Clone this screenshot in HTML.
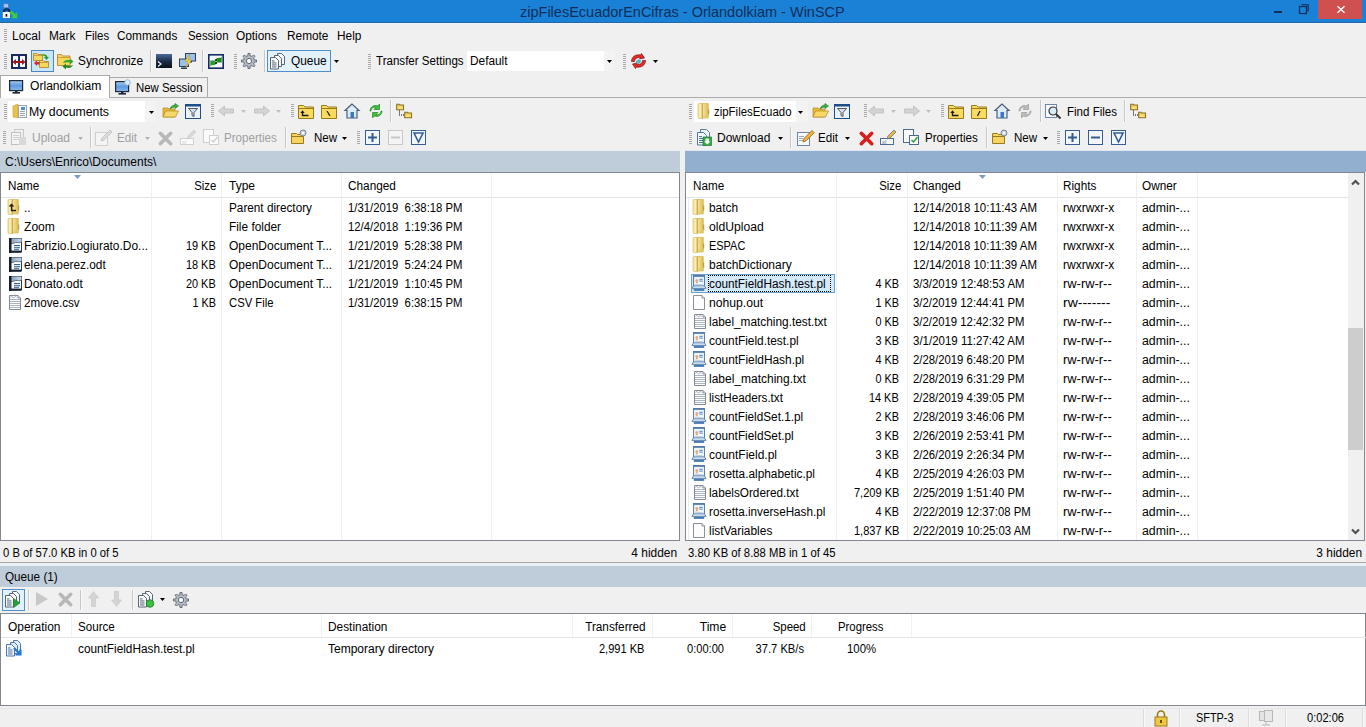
<!DOCTYPE html><html><head><meta charset="utf-8"><style>
html,body{margin:0;padding:0}
body{width:1366px;height:727px;overflow:hidden;position:relative;background:#f0f0f0;font-family:"Liberation Sans",sans-serif;font-size:12px;color:#000}
.t{position:absolute;white-space:pre;line-height:14px;height:14px}
svg{overflow:visible}
</style></head><body>
<div style="position:absolute;left:0px;top:0px;width:1366px;height:22px;background:#1a82d6"></div>
<div style="position:absolute;left:0px;top:22px;width:1366px;height:1px;background:#2a65a4"></div>
<div style="position:absolute;left:0px;top:23px;width:1366px;height:1px;background:#eaf6fc"></div>
<div class="t" style="left:520px;top:5px;color:#0f2f5a;font-size:14.5px;line-height:16px;height:16px;top:4px;">zipFilesEcuadorEnCifras - Orlandolkiam - WinSCP</div>
<svg style="position:absolute;left:2px;top:3px" width="16" height="16" viewBox="0 0 16 16"><rect x="1.5" y="0.8" width="5" height="4" fill="#a4c8f4" stroke="#4a78b8" stroke-width="0.7"/>
<path d="M1.8 9.2a2.9 2.9 0 0 1 5.8 0" stroke="#10285a" stroke-width="2" fill="none"/>
<rect x="0.8" y="9" width="7.2" height="6" fill="#f2f2f0"/><rect x="3.6" y="11" width="1.6" height="2.6" fill="#101010"/>
<path d="M8.5 8.5l5 5" stroke="#3ccc3c" stroke-width="3"/><path d="M15.2 9v6.2H9z" fill="#3ccc3c"/></svg>
<div style="position:absolute;left:1274px;top:11px;width:8px;height:2px;background:#0f2f5a"></div>
<svg style="position:absolute;left:1298px;top:4px" width="12" height="11" viewBox="0 0 12 11"><rect x="1.5" y="2.5" width="7" height="7" fill="none" stroke="#0f2f5a" stroke-width="1.3"/><path d="M3.5 0.8h6.7v6.7" fill="none" stroke="#0f2f5a" stroke-width="1.1"/></svg>
<div style="position:absolute;left:1318px;top:0px;width:44px;height:19px;background:#d05050"></div>
<svg style="position:absolute;left:1337px;top:6px" width="8" height="7" viewBox="0 0 8 7"><path d="M0.5 0.3l7 6.4M7.5 0.3l-7 6.4" stroke="#fff" stroke-width="1.4"/></svg>
<svg style="position:absolute;left:4px;top:29px" width="3" height="13" viewBox="0 0 3 13"><rect x="0" y="0" width="3" height="1" fill="#a9a9a9"/><rect x="0" y="2" width="3" height="1" fill="#a9a9a9"/><rect x="0" y="4" width="3" height="1" fill="#a9a9a9"/><rect x="0" y="6" width="3" height="1" fill="#a9a9a9"/><rect x="0" y="8" width="3" height="1" fill="#a9a9a9"/><rect x="0" y="10" width="3" height="1" fill="#a9a9a9"/><rect x="0" y="12" width="3" height="1" fill="#a9a9a9"/></svg>
<div class="t" style="left:12px;top:29px;">Local</div>
<div class="t" style="left:49px;top:29px;transform:scaleX(0.9875);transform-origin:0 0;">Mark</div>
<div class="t" style="left:85px;top:29px;transform:scaleX(0.9532);transform-origin:0 0;">Files</div>
<div class="t" style="left:117px;top:29px;transform:scaleX(0.9824);transform-origin:0 0;">Commands</div>
<div class="t" style="left:188px;top:29px;transform:scaleX(0.9479);transform-origin:0 0;">Session</div>
<div class="t" style="left:236px;top:29px;transform:scaleX(0.9878);transform-origin:0 0;">Options</div>
<div class="t" style="left:287px;top:29px;transform:scaleX(0.9863);transform-origin:0 0;">Remote</div>
<div class="t" style="left:337px;top:29px;transform:scaleX(0.9876);transform-origin:0 0;">Help</div>
<svg style="position:absolute;left:4px;top:54px" width="3" height="15" viewBox="0 0 3 15"><rect x="0" y="0" width="3" height="1" fill="#a9a9a9"/><rect x="0" y="2" width="3" height="1" fill="#a9a9a9"/><rect x="0" y="4" width="3" height="1" fill="#a9a9a9"/><rect x="0" y="6" width="3" height="1" fill="#a9a9a9"/><rect x="0" y="8" width="3" height="1" fill="#a9a9a9"/><rect x="0" y="10" width="3" height="1" fill="#a9a9a9"/><rect x="0" y="12" width="3" height="1" fill="#a9a9a9"/><rect x="0" y="14" width="3" height="1" fill="#a9a9a9"/></svg>
<svg style="position:absolute;left:11px;top:54px" width="16" height="15" viewBox="0 0 16 15"><rect x="1" y="1" width="14" height="13" fill="#f4f8fc" stroke="#1b2a5a" stroke-width="2"/><rect x="7" y="1" width="2" height="13" fill="#1b3070"/>
<path d="M1.5 8l3.5-3v2h6V5l3.5 3-3.5 3V9H5v2z" fill="#a51515"/></svg>
<div style="position:absolute;left:31px;top:50px;width:23px;height:22px;background:#c9e5fa;border:1px solid #4d84c4;box-sizing:border-box"></div>
<svg style="position:absolute;left:33px;top:52px" width="17" height="17" viewBox="0 0 17 17"><path d="M0.5 1.5h3.5l1 1h4.5v6h-9z" fill="#f7d85a" stroke="#b8892a" stroke-width="0.9"/><path d="M0.5 3.5h9" stroke="#b8892a" stroke-width="0.7"/>
<path d="M6.5 8.5h3.5l1 1h4.5v6h-9z" fill="#f7d85a" stroke="#b8892a" stroke-width="0.9"/><path d="M6.5 10.5h9" stroke="#b8892a" stroke-width="0.7"/>
<path d="M9.5 2.5c2.5-0.5 4.5 0.5 5 2.5h1.5l-2.5 3-2.5-3h1.5c-0.5-1-1.5-1.5-3-1.5z" fill="#2e9e2e"/>
<path d="M1 11l3-2.5v1.5h2.5v2.5H4v1.5z" fill="#d42a2a"/></svg>
<svg style="position:absolute;left:57px;top:53px" width="17" height="17" viewBox="0 0 17 17"><path d="M0.5 1.5h4l1 1.5h7.5v9.5h-12.5z" fill="#f7d85a" stroke="#b8892a" stroke-width="0.9"/><path d="M0.5 4.5h12.5" stroke="#b8892a" stroke-width="0.7"/>
<path d="M6 10c1-2.5 4-3.5 7-2.5v-2l3.5 3-3.5 3v-2c-2-0.5-4.5-0.5-7 0.5z" fill="#2ea82e"/>
<path d="M16 12c-1 2.5-4 3.5-7 2.5v2l-3.5-3 3.5-3v2c2 0.5 4.5 0.5 7-0.5z" fill="#1e8a1e"/></svg>
<div class="t" style="left:78px;top:54px;transform:scaleX(0.9855);transform-origin:0 0;">Synchronize</div>
<div style="position:absolute;left:150px;top:50px;width:1px;height:22px;background:#c6c6c6"></div>
<div style="position:absolute;left:151px;top:50px;width:1px;height:22px;background:#fbfbfb"></div>
<svg style="position:absolute;left:156px;top:54px" width="16" height="14" viewBox="0 0 16 14"><defs><linearGradient id="cg" x1="0" x2="0" y1="0" y2="1"><stop offset="0" stop-color="#4a6a9a"/><stop offset="0.5" stop-color="#1e2e48"/><stop offset="1" stop-color="#0c1218"/></linearGradient></defs>
<rect x="0" y="0" width="16" height="14" fill="url(#cg)"/><path d="M2 7.5l3 2.5-3 2.5" stroke="#e8eef4" stroke-width="1.2" fill="none"/></svg>
<svg style="position:absolute;left:179px;top:53px" width="17" height="16" viewBox="0 0 17 16"><rect x="6.5" y="0.5" width="10" height="7.5" fill="#9cc0ea" stroke="#2e3e58"/><rect x="10" y="8" width="3" height="1.5" fill="#2e3e58"/>
<rect x="0.5" y="6" width="9" height="7.5" fill="#9cc0ea" stroke="#2e3e58"/><rect x="2" y="14.5" width="6" height="1.5" fill="#2e3e58"/><rect x="4.5" y="13.5" width="1" height="1" fill="#2e3e58"/>
<path d="M10.5 1.5l-4.5 6.5h3l-2 6.5 5.5-7.5h-3z" fill="#f6e040" stroke="#b09010" stroke-width="0.5"/></svg>
<div style="position:absolute;left:202px;top:50px;width:1px;height:22px;background:#c6c6c6"></div>
<div style="position:absolute;left:203px;top:50px;width:1px;height:22px;background:#fbfbfb"></div>
<svg style="position:absolute;left:208px;top:54px" width="16" height="15" viewBox="0 0 16 15"><rect x="0.8" y="0.8" width="14.4" height="13.4" fill="#f4faff" stroke="#142a60" stroke-width="1.6"/>
<path d="M7 6c1.5-2 3.8-2.6 5.5-2l1.2-1.4v5.8h-5.8l1.8-1.6c-1-.4-2 .2-2.7.9z" fill="#1e8a1e"/>
<path d="M9 9c-1.5 2-3.8 2.6-5.5 2l-1.2 1.4v-5.8h5.8l-1.8 1.6c1 .4 2-.2 2.7-.9z" fill="#2a9a2a"/>
<circle cx="8" cy="6.2" r="0.9" fill="#111"/><circle cx="8" cy="9" r="0.9" fill="#111"/></svg>
<svg style="position:absolute;left:234px;top:54px" width="3" height="15" viewBox="0 0 3 15"><rect x="0" y="0" width="3" height="1" fill="#a9a9a9"/><rect x="0" y="2" width="3" height="1" fill="#a9a9a9"/><rect x="0" y="4" width="3" height="1" fill="#a9a9a9"/><rect x="0" y="6" width="3" height="1" fill="#a9a9a9"/><rect x="0" y="8" width="3" height="1" fill="#a9a9a9"/><rect x="0" y="10" width="3" height="1" fill="#a9a9a9"/><rect x="0" y="12" width="3" height="1" fill="#a9a9a9"/><rect x="0" y="14" width="3" height="1" fill="#a9a9a9"/></svg>
<svg style="position:absolute;left:241px;top:53px" width="16" height="16" viewBox="0 0 16 16"><path d="M6.98 2.70 L6.94 0.47 L9.06 0.47 L9.02 2.70 L10.07 3.01 L11.03 3.53 L12.57 1.93 L14.07 3.43 L12.47 4.97 L12.99 5.93 L13.30 6.98 L15.53 6.94 L15.53 9.06 L13.30 9.02 L12.99 10.07 L12.47 11.03 L14.07 12.57 L12.57 14.07 L11.03 12.47 L10.07 12.99 L9.02 13.30 L9.06 15.53 L6.94 15.53 L6.98 13.30 L5.93 12.99 L4.97 12.47 L3.43 14.07 L1.93 12.57 L3.53 11.03 L3.01 10.07 L2.70 9.02 L0.47 9.06 L0.47 6.94 L2.70 6.98 L3.01 5.93 L3.53 4.97 L1.93 3.43 L3.43 1.93 L4.97 3.53 L5.93 3.01Z" fill="#b2bac4" stroke="#5e6670" stroke-width="0.9"/><circle cx="8" cy="8" r="2.6" fill="#fff" stroke="#5e6670" stroke-width="1"/></svg>
<div style="position:absolute;left:264px;top:50px;width:1px;height:22px;background:#c6c6c6"></div>
<div style="position:absolute;left:265px;top:50px;width:1px;height:22px;background:#fbfbfb"></div>
<div style="position:absolute;left:267px;top:50px;width:64px;height:22px;background:#e3f1fb;border:1px solid #4f8fcb;box-sizing:border-box"></div>
<svg style="position:absolute;left:270px;top:53px" width="16" height="17" viewBox="0 0 16 17"><path d="M7.5 0.5h4l3 3v8h-7z" fill="#f6f8fb" stroke="#4a5566" stroke-width="0.9"/><path d="M4.5 2.5h4l3 3v8h-7z" fill="#f6f8fb" stroke="#4a5566" stroke-width="0.9"/>
<path d="M0.5 4.5h5l3 3v8.5h-8z" fill="#f8fafc" stroke="#4a5566" stroke-width="0.9"/><g fill="#4a5566"><rect x="2" y="7.5" width="2.5" height="0.9"/><rect x="2" y="9.5" width="4.5" height="0.9"/><rect x="2" y="11.5" width="4.5" height="0.9"/><rect x="2" y="13.5" width="4.5" height="0.9"/></g></svg>
<div class="t" style="left:291px;top:54px;transform:scaleX(0.9911);transform-origin:0 0;">Queue</div>
<svg style="position:absolute;left:334px;top:60px" width="5" height="3" viewBox="0 0 5 3"><path d="M0 0H5L2.5 3Z" fill="#000"/></svg>
<svg style="position:absolute;left:368px;top:54px" width="3" height="15" viewBox="0 0 3 15"><rect x="0" y="0" width="3" height="1" fill="#a9a9a9"/><rect x="0" y="2" width="3" height="1" fill="#a9a9a9"/><rect x="0" y="4" width="3" height="1" fill="#a9a9a9"/><rect x="0" y="6" width="3" height="1" fill="#a9a9a9"/><rect x="0" y="8" width="3" height="1" fill="#a9a9a9"/><rect x="0" y="10" width="3" height="1" fill="#a9a9a9"/><rect x="0" y="12" width="3" height="1" fill="#a9a9a9"/><rect x="0" y="14" width="3" height="1" fill="#a9a9a9"/></svg>
<div class="t" style="left:376px;top:54px;transform:scaleX(0.9638);transform-origin:0 0;">Transfer Settings</div>
<div style="position:absolute;left:467px;top:51px;width:148px;height:20px;background:#fff"></div>
<div style="position:absolute;left:604px;top:51px;width:11px;height:20px;background:#f3f3f3"></div>
<div class="t" style="left:470px;top:54px;transform:scaleX(0.9869);transform-origin:0 0;">Default</div>
<svg style="position:absolute;left:607px;top:60px" width="5" height="3" viewBox="0 0 5 3"><path d="M0 0H5L2.5 3Z" fill="#000"/></svg>
<svg style="position:absolute;left:623px;top:54px" width="3" height="15" viewBox="0 0 3 15"><rect x="0" y="0" width="3" height="1" fill="#a9a9a9"/><rect x="0" y="2" width="3" height="1" fill="#a9a9a9"/><rect x="0" y="4" width="3" height="1" fill="#a9a9a9"/><rect x="0" y="6" width="3" height="1" fill="#a9a9a9"/><rect x="0" y="8" width="3" height="1" fill="#a9a9a9"/><rect x="0" y="10" width="3" height="1" fill="#a9a9a9"/><rect x="0" y="12" width="3" height="1" fill="#a9a9a9"/><rect x="0" y="14" width="3" height="1" fill="#a9a9a9"/></svg>
<svg style="position:absolute;left:630px;top:53px" width="17" height="16" viewBox="0 0 17 16"><path d="M1.5 8.5c0-4.5 4-7.5 9-6.5l1-1.5 3 4.5-5 1 1-1.5c-3.5-0.5-6 1.5-6 4z" fill="#e42a2a" stroke="#8a1010" stroke-width="0.7"/>
<path d="M15.5 7.5c0 4.5-4 7.5-9 6.5l-1 1.5-3-4.5 5-1-1 1.5c3.5 0.5 6-1.5 6-4z" fill="#e42a2a" stroke="#8a1010" stroke-width="0.7"/>
<path d="M5.5 9.5c0.5-2 2-3 3.5-3l2 1c0 2-1.5 3.5-3.5 3.5z" fill="#58a8d8"/><path d="M7 8.5l2 1.5" stroke="#70c070" stroke-width="1.5"/></svg>
<svg style="position:absolute;left:653px;top:60px" width="5" height="3" viewBox="0 0 5 3"><path d="M0 0H5L2.5 3Z" fill="#000"/></svg>
<div style="position:absolute;left:0px;top:75px;width:110px;height:23px;background:#fff;border:1px solid #a9a9a9;border-bottom:none;box-sizing:border-box"></div>
<svg style="position:absolute;left:9px;top:80px" width="17" height="16" viewBox="0 0 17 16"><defs><linearGradient id="mg" x1="0" x2="0" y1="0" y2="1"><stop offset="0" stop-color="#a8cdf2"/><stop offset="0.5" stop-color="#5f9be0"/><stop offset="1" stop-color="#8ab8ea"/></linearGradient></defs>
<rect x="0.6" y="0.6" width="13" height="10" fill="url(#mg)" stroke="#1a2838" stroke-width="1.2"/>
<rect x="6" y="11" width="2.5" height="1" fill="#1a2838"/><rect x="3.5" y="12" width="7.5" height="1.6" fill="#1a2838"/></svg>
<div class="t" style="left:30px;top:79px;transform:scaleX(1.0087);transform-origin:0 0;">Orlandolkiam</div>
<div style="position:absolute;left:109px;top:77px;width:99px;height:21px;background:#f0f0f0;border:1px solid #a9a9a9;border-left:none;box-sizing:border-box"></div>
<div style="position:absolute;left:109px;top:77px;width:1px;height:21px;background:#a9a9a9"></div>
<svg style="position:absolute;left:115px;top:81px" width="17" height="16" viewBox="0 0 17 16"><defs><linearGradient id="mg" x1="0" x2="0" y1="0" y2="1"><stop offset="0" stop-color="#a8cdf2"/><stop offset="0.5" stop-color="#5f9be0"/><stop offset="1" stop-color="#8ab8ea"/></linearGradient></defs>
<rect x="0.6" y="0.6" width="13" height="10" fill="url(#mg)" stroke="#1a2838" stroke-width="1.2"/>
<rect x="6" y="11" width="2.5" height="1" fill="#1a2838"/><rect x="3.5" y="12" width="7.5" height="1.6" fill="#1a2838"/><circle cx="12.5" cy="1.5" r="2.8" fill="#d8ecfc" stroke="#8aa8c8" stroke-width="0.8"/></svg>
<div class="t" style="left:136px;top:81px;transform:scaleX(0.9500);transform-origin:0 0;">New Session</div>
<div style="position:absolute;left:109px;top:97px;width:1257px;height:1px;background:#acacac"></div>
<svg style="position:absolute;left:4px;top:104px" width="3" height="15" viewBox="0 0 3 15"><rect x="0" y="0" width="3" height="1" fill="#a9a9a9"/><rect x="0" y="2" width="3" height="1" fill="#a9a9a9"/><rect x="0" y="4" width="3" height="1" fill="#a9a9a9"/><rect x="0" y="6" width="3" height="1" fill="#a9a9a9"/><rect x="0" y="8" width="3" height="1" fill="#a9a9a9"/><rect x="0" y="10" width="3" height="1" fill="#a9a9a9"/><rect x="0" y="12" width="3" height="1" fill="#a9a9a9"/><rect x="0" y="14" width="3" height="1" fill="#a9a9a9"/></svg>
<div style="position:absolute;left:8px;top:101px;width:148px;height:21px;background:#fff"></div>
<div style="position:absolute;left:145px;top:101px;width:11px;height:21px;background:#f3f3f3"></div>
<svg style="position:absolute;left:12px;top:103px" width="16" height="16" viewBox="0 0 16 16"><path d="M1 3l5-2v14l-5-1z" fill="#e8c24f" stroke="#c9a23a" stroke-width="0.6"/>
<rect x="6.5" y="2.5" width="8" height="12" fill="#f8f8fa" stroke="#9aa7b8"/>
<rect x="9" y="4" width="4" height="3" fill="#4a90d9"/><g fill="#9aa"><rect x="8" y="8" width="5" height="1"/><rect x="8" y="10" width="5" height="1"/><rect x="8" y="12" width="5" height="1"/></g></svg>
<div class="t" style="left:29px;top:105px;transform:scaleX(1.0254);transform-origin:0 0;">My documents</div>
<svg style="position:absolute;left:149px;top:111px" width="5" height="3" viewBox="0 0 5 3"><path d="M0 0H5L2.5 3Z" fill="#000"/></svg>
<svg style="position:absolute;left:162px;top:103px" width="17" height="16" viewBox="0 0 17 16"><path d="M1 5h5l1 1h6v8H1z" fill="#e6bb3c" stroke="#b08a20" stroke-width="0.7"/>
<path d="M1 14l2.5-6h13l-3 6z" fill="#f7d86a" stroke="#b08a20" stroke-width="0.7"/>
<path d="M8 6c1-3 3-4 5-4v-1.5l3.5 2.5-3.5 2.5v-1.5c-2 0-3.5 1-5 2z" fill="#3cb03c" stroke="#1e7a1e" stroke-width="0.6"/></svg>
<svg style="position:absolute;left:185px;top:104px" width="16" height="15" viewBox="0 0 16 15"><rect x="0.5" y="0.5" width="15" height="14" fill="#eaf2fb" stroke="#1d4e89"/>
<rect x="0.5" y="0.5" width="15" height="2" fill="#1d4e89"/>
<path d="M3.5 4.5h9l-3.5 4v4l-2 -1v-3z" fill="#cfe0f3" stroke="#333" stroke-width="0.8"/></svg>
<svg style="position:absolute;left:211px;top:104px" width="3" height="14" viewBox="0 0 3 14"><rect x="0" y="0" width="3" height="1" fill="#a9a9a9"/><rect x="0" y="2" width="3" height="1" fill="#a9a9a9"/><rect x="0" y="4" width="3" height="1" fill="#a9a9a9"/><rect x="0" y="6" width="3" height="1" fill="#a9a9a9"/><rect x="0" y="8" width="3" height="1" fill="#a9a9a9"/><rect x="0" y="10" width="3" height="1" fill="#a9a9a9"/><rect x="0" y="12" width="3" height="1" fill="#a9a9a9"/></svg>
<svg style="position:absolute;left:218px;top:105px" width="17" height="12" viewBox="0 0 17 12"><path d="M0.5 6l6-5v3h9v4h-9v3z" fill="#d3d3d3" stroke="#c4c4c4"/></svg>
<svg style="position:absolute;left:241px;top:110px" width="5" height="3" viewBox="0 0 5 3"><path d="M0 0H5L2.5 3Z" fill="#c0c0c0"/></svg>
<svg style="position:absolute;left:253px;top:105px" width="17" height="12" viewBox="0 0 17 12"><path d="M16.5 6l-6-5v3h-9v4h9v3z" fill="#d3d3d3" stroke="#c4c4c4"/></svg>
<svg style="position:absolute;left:276px;top:110px" width="5" height="3" viewBox="0 0 5 3"><path d="M0 0H5L2.5 3Z" fill="#c0c0c0"/></svg>
<svg style="position:absolute;left:291px;top:104px" width="3" height="14" viewBox="0 0 3 14"><rect x="0" y="0" width="3" height="1" fill="#a9a9a9"/><rect x="0" y="2" width="3" height="1" fill="#a9a9a9"/><rect x="0" y="4" width="3" height="1" fill="#a9a9a9"/><rect x="0" y="6" width="3" height="1" fill="#a9a9a9"/><rect x="0" y="8" width="3" height="1" fill="#a9a9a9"/><rect x="0" y="10" width="3" height="1" fill="#a9a9a9"/><rect x="0" y="12" width="3" height="1" fill="#a9a9a9"/></svg>
<svg style="position:absolute;left:298px;top:104px" width="16" height="15" viewBox="0 0 16 15"><path d="M0.5 1.5h5l1.5 1.5h8.5v11.5h-15z" fill="#f9dc5e" stroke="#9a7a18"/>
<path d="M0.5 4.5h15" stroke="#9a7a18"/>
<path d="M2.3 9L4.5 6.3 6.7 9z" fill="#1a1a1a"/><path d="M4.5 8.5v3h6" stroke="#1a1a1a" stroke-width="1.4" fill="none"/></svg>
<svg style="position:absolute;left:321px;top:104px" width="16" height="15" viewBox="0 0 16 15"><path d="M0.5 1.5h5l1.5 1.5h8.5v11.5h-15z" fill="#f9dc5e" stroke="#9a7a18"/>
<path d="M0.5 4.5h15" stroke="#9a7a18"/><path d="M6 7l3 5" stroke="#222" stroke-width="1.3"/></svg>
<svg style="position:absolute;left:344px;top:103px" width="16" height="16" viewBox="0 0 16 16"><path d="M8 1L1 7.5h2V15h10V7.5h2z" fill="#dcebf8" stroke="#4a6078" stroke-width="1.2"/>
<rect x="6.5" y="9" width="3.5" height="6" fill="#3a78c8"/></svg>
<svg style="position:absolute;left:368px;top:103px" width="16" height="16" viewBox="0 0 16 16"><path d="M2 8c0-4 4-6.5 8-5l1.5-2v5.5h-5.5l2-2c-2.5-1-5 1-5 3.5z" fill="#3fbf3f" stroke="#1d8a1d" stroke-width="0.7"/>
<path d="M14 8c0 4-4 6.5-8 5l-1.5 2v-5.5h5.5l-2 2c2.5 1 5-1 5-3.5z" fill="#3fbf3f" stroke="#1d8a1d" stroke-width="0.7"/></svg>
<div style="position:absolute;left:390px;top:100px;width:1px;height:22px;background:#c6c6c6"></div>
<div style="position:absolute;left:391px;top:100px;width:1px;height:22px;background:#fbfbfb"></div>
<svg style="position:absolute;left:396px;top:103px" width="17" height="16" viewBox="0 0 17 16"><path d="M0.7 1.2h2.5l0.8 0.8h3.5v4.8H0.7z" fill="#f8e07a" stroke="#8a7020" stroke-width="1.1"/><path d="M0.7 2.8h6.8" stroke="#c0a030" stroke-width="0.6"/>
<path d="M8.7 9.2h2.5l0.8 0.8h3.5v4.8H8.7z" fill="#f8e07a" stroke="#8a7020" stroke-width="1.1"/><path d="M8.7 10.8h6.8" stroke="#c0a030" stroke-width="0.6"/>
<g fill="#000"><rect x="3" y="7.5" width="1" height="1"/><rect x="3" y="9.5" width="1" height="1"/><rect x="3" y="11.5" width="1" height="1"/><rect x="5" y="11.5" width="1" height="1"/><rect x="7" y="11.5" width="1" height="1"/></g></svg>
<svg style="position:absolute;left:3px;top:131px" width="3" height="13" viewBox="0 0 3 13"><rect x="0" y="0" width="3" height="1" fill="#a9a9a9"/><rect x="0" y="2" width="3" height="1" fill="#a9a9a9"/><rect x="0" y="4" width="3" height="1" fill="#a9a9a9"/><rect x="0" y="6" width="3" height="1" fill="#a9a9a9"/><rect x="0" y="8" width="3" height="1" fill="#a9a9a9"/><rect x="0" y="10" width="3" height="1" fill="#a9a9a9"/><rect x="0" y="12" width="3" height="1" fill="#a9a9a9"/></svg>
<svg style="position:absolute;left:10px;top:129px" width="17" height="17" viewBox="0 0 17 17"><rect x="4.5" y="0.5" width="9" height="11" fill="#f0f0f0" stroke="#c8c8c8"/>
<rect x="1.5" y="3.5" width="9" height="12" fill="#f4f4f4" stroke="#c0c0c0"/>
<g fill="#cfcfcf"><rect x="3" y="6" width="6" height="1"/><rect x="3" y="8" width="6" height="1"/><rect x="3" y="10" width="6" height="1"/></g>
<rect x="9" y="8" width="7" height="8" fill="#d8d8d8"/></svg>
<div class="t" style="left:32px;top:131px;color:#a0a0a0;">Upload</div>
<svg style="position:absolute;left:78px;top:137px" width="5" height="3" viewBox="0 0 5 3"><path d="M0 0H5L2.5 3Z" fill="#b0b0b0"/></svg>
<div style="position:absolute;left:90px;top:127px;width:1px;height:21px;background:#c6c6c6"></div>
<div style="position:absolute;left:91px;top:127px;width:1px;height:21px;background:#fbfbfb"></div>
<svg style="position:absolute;left:95px;top:129px" width="17" height="17" viewBox="0 0 17 17"><rect x="0.5" y="3.5" width="12" height="13" fill="#f4f4f4" stroke="#cfcfcf"/>
<path d="M6 12l1-3 8-8 2 2-8 8z" fill="#dcdcdc" stroke="#c4c4c4"/></svg>
<div class="t" style="left:117px;top:131px;color:#a0a0a0;transform:scaleX(0.9697);transform-origin:0 0;">Edit</div>
<svg style="position:absolute;left:145px;top:137px" width="5" height="3" viewBox="0 0 5 3"><path d="M0 0H5L2.5 3Z" fill="#b0b0b0"/></svg>
<svg style="position:absolute;left:158px;top:131px" width="15" height="15" viewBox="0 0 15 15"><path d="M2.3 2.3L12.7 12.7M12.7 2.3L2.3 12.7" stroke="#b8b8b8" stroke-width="3.6" stroke-linecap="round"/></svg>
<svg style="position:absolute;left:180px;top:129px" width="17" height="17" viewBox="0 0 17 17"><rect x="0.5" y="9.5" width="13" height="6" fill="#fbfbfb" stroke="#cfcfcf"/>
<text x="2" y="15" font-size="6" fill="#cfcfcf" font-family="Liberation Sans">x|</text>
<path d="M7 10l1-3 6-6 2 2-6 6z" fill="#d8d8d8" stroke="#cfcfcf" stroke-width="0.7"/></svg>
<svg style="position:absolute;left:203px;top:129px" width="17" height="17" viewBox="0 0 17 17"><rect x="0.5" y="0.5" width="10" height="13" fill="#fbfbfb" stroke="#cfcfcf"/>
<rect x="6.5" y="6.5" width="9" height="9" fill="#fbfbfb" stroke="#cfcfcf"/>
<path d="M8.5 11l2 2 4-5" stroke="#cfcfcf" stroke-width="1.5" fill="none"/></svg>
<div class="t" style="left:224px;top:131px;color:#a0a0a0;transform:scaleX(0.9644);transform-origin:0 0;">Properties</div>
<div style="position:absolute;left:285px;top:127px;width:1px;height:21px;background:#c6c6c6"></div>
<div style="position:absolute;left:286px;top:127px;width:1px;height:21px;background:#fbfbfb"></div>
<svg style="position:absolute;left:291px;top:129px" width="16" height="16" viewBox="0 0 16 16"><path d="M0.5 4.5h5l1 1h6v9h-12z" fill="#f5d463" stroke="#9a7a18"/>
<path d="M0.5 7.5h12" stroke="#9a7a18"/>
<circle cx="12" cy="4" r="3" fill="#c8d4e0" stroke="#7a8a9a"/><circle cx="12" cy="4" r="1.2" fill="#fff"/></svg>
<div class="t" style="left:314px;top:131px;transform:scaleX(0.9636);transform-origin:0 0;">New</div>
<svg style="position:absolute;left:342px;top:137px" width="5" height="3" viewBox="0 0 5 3"><path d="M0 0H5L2.5 3Z" fill="#000"/></svg>
<svg style="position:absolute;left:357px;top:131px" width="3" height="13" viewBox="0 0 3 13"><rect x="0" y="0" width="3" height="1" fill="#a9a9a9"/><rect x="0" y="2" width="3" height="1" fill="#a9a9a9"/><rect x="0" y="4" width="3" height="1" fill="#a9a9a9"/><rect x="0" y="6" width="3" height="1" fill="#a9a9a9"/><rect x="0" y="8" width="3" height="1" fill="#a9a9a9"/><rect x="0" y="10" width="3" height="1" fill="#a9a9a9"/><rect x="0" y="12" width="3" height="1" fill="#a9a9a9"/></svg>
<svg style="position:absolute;left:365px;top:130px" width="15" height="15" viewBox="0 0 15 15"><rect x="0.5" y="0.5" width="14" height="14" fill="#f2f6fb" stroke="#345d91"/>
<path d="M7.5 3v9M3 7.5h9" stroke="#345d91" stroke-width="2"/></svg>
<svg style="position:absolute;left:388px;top:130px" width="15" height="15" viewBox="0 0 15 15"><rect x="0.5" y="0.5" width="14" height="14" fill="#f4f4f4" stroke="#c8c8c8"/>
<path d="M3 7.5h9" stroke="#c8c8c8" stroke-width="2"/></svg>
<svg style="position:absolute;left:411px;top:130px" width="15" height="15" viewBox="0 0 15 15"><rect x="0.5" y="0.5" width="14" height="14" fill="#f2f6fb" stroke="#345d91"/>
<path d="M3 3h9l-4.5 9z" fill="none" stroke="#345d91" stroke-width="1.6"/></svg>
<div style="position:absolute;left:0px;top:150px;width:680px;height:1px;background:#e8eef4"></div>
<div style="position:absolute;left:0px;top:151px;width:680px;height:21px;background:#bfcddb"></div>
<div class="t" style="left:5px;top:155px;">C:\Users\Enrico\Documents\</div>
<div style="position:absolute;left:685px;top:150px;width:681px;height:1px;background:#dde8f4"></div>
<div style="position:absolute;left:685px;top:151px;width:681px;height:21px;background:#93afcf"></div>
<div style="position:absolute;left:0px;top:172px;width:680px;height:369px;background:#fff;border:1px solid #828790;box-sizing:border-box"></div>
<div style="position:absolute;left:1px;top:197px;width:678px;height:1px;background:#e5e5e5"></div>
<div style="position:absolute;left:151px;top:173px;width:1px;height:367px;background:#f0f0f0"></div>
<div style="position:absolute;left:221px;top:173px;width:1px;height:367px;background:#f0f0f0"></div>
<div style="position:absolute;left:341px;top:173px;width:1px;height:367px;background:#f0f0f0"></div>
<div style="position:absolute;left:491px;top:173px;width:1px;height:367px;background:#f0f0f0"></div>
<svg style="position:absolute;left:74px;top:175px" width="7" height="4" viewBox="0 0 7 4"><path d="M0 0h7l-3.5 4z" fill="#7a9cc0"/></svg>
<div class="t" style="left:8px;top:179px;transform:scaleX(0.9740);transform-origin:0 0;">Name</div>
<div class="t" style="right:1150px;top:179px;transform:scaleX(0.9469);transform-origin:100% 0;">Size</div>
<div class="t" style="left:229px;top:179px;">Type</div>
<div class="t" style="left:348px;top:179px;transform:scaleX(0.9830);transform-origin:0 0;">Changed</div>
<svg style="position:absolute;left:6px;top:199px" width="16" height="16" viewBox="0 0 16 16"><defs><linearGradient id="fgL" x1="0" x2="1"><stop offset="0" stop-color="#f2dc8a"/><stop offset="0.5" stop-color="#fcf0b8"/><stop offset="1" stop-color="#f4e096"/></linearGradient>
<linearGradient id="fgR" x1="0" x2="1"><stop offset="0" stop-color="#f8e8a2"/><stop offset="1" stop-color="#dcbc52"/></linearGradient></defs>
<path d="M2 1.5q0-1 1-1h3.5v15h-3.5q-1 0-1-1z" fill="url(#fgL)" stroke="#d8c070" stroke-width="0.7"/>
<path d="M6.3 0.5h6v14.5h-6z" fill="url(#fgR)" stroke="#d2b458" stroke-width="0.7"/>
<path d="M6.3 0.5v15" stroke="#c4a043" stroke-width="0.9"/>
<path d="M12.3 6.5h0.9v5h-0.9z" fill="#a88a3a"/>
<path d="M7 12.5h5v2.3H7z" fill="#d8d070" opacity="0.55"/></svg>
<svg style="position:absolute;left:6px;top:199px" width="16" height="16" viewBox="0 0 16 16"><path d="M3.5 7.5L5.5 5.5L7.5 7.5M5.5 6v5.5h4.5" stroke="#2a2010" stroke-width="1.3" fill="none"/></svg>
<div class="t" style="left:24px;top:201px;transform:scaleX(0.9800);transform-origin:0 0;">..</div>
<div class="t" style="left:229px;top:201px;transform:scaleX(0.9794);transform-origin:0 0;">Parent directory</div>
<div class="t" style="left:348px;top:201px;transform:scaleX(0.9428);transform-origin:0 0;">1/31/2019  6:38:18 PM</div>
<svg style="position:absolute;left:6px;top:218px" width="16" height="16" viewBox="0 0 16 16"><defs><linearGradient id="fgL" x1="0" x2="1"><stop offset="0" stop-color="#f2dc8a"/><stop offset="0.5" stop-color="#fcf0b8"/><stop offset="1" stop-color="#f4e096"/></linearGradient>
<linearGradient id="fgR" x1="0" x2="1"><stop offset="0" stop-color="#f8e8a2"/><stop offset="1" stop-color="#dcbc52"/></linearGradient></defs>
<path d="M2 1.5q0-1 1-1h3.5v15h-3.5q-1 0-1-1z" fill="url(#fgL)" stroke="#d8c070" stroke-width="0.7"/>
<path d="M6.3 0.5h6v14.5h-6z" fill="url(#fgR)" stroke="#d2b458" stroke-width="0.7"/>
<path d="M6.3 0.5v15" stroke="#c4a043" stroke-width="0.9"/>
<path d="M12.3 6.5h0.9v5h-0.9z" fill="#a88a3a"/>
<path d="M7 12.5h5v2.3H7z" fill="#d8d070" opacity="0.55"/></svg>
<div class="t" style="left:24px;top:220px;transform:scaleX(1.0083);transform-origin:0 0;">Zoom</div>
<div class="t" style="left:229px;top:220px;transform:scaleX(0.9871);transform-origin:0 0;">File folder</div>
<div class="t" style="left:348px;top:220px;transform:scaleX(0.9428);transform-origin:0 0;">12/4/2018  1:19:36 PM</div>
<svg style="position:absolute;left:6px;top:237px" width="16" height="16" viewBox="0 0 16 16"><defs><linearGradient id="og" x1="0" x2="1"><stop offset="0" stop-color="#8aa2bc"/><stop offset="1" stop-color="#c8d6e4"/></linearGradient></defs>
<rect x="4.5" y="1.5" width="11" height="13" fill="#f8fafc" stroke="#2a3a50"/>
<path d="M5 1.5h10.5v3.5c-2 1.5-4-0.5-6 0.5s-3 1.5-4.5 1z" fill="url(#og)"/>
<path d="M5 6.5c1.5 0.5 2.5-0.5 4.5-1s4 1 6-0.5" stroke="#4a6078" stroke-width="0.8" fill="none"/>
<rect x="3" y="1" width="2.5" height="15" fill="#141e2c"/><rect x="3" y="13.6" width="12.5" height="2.2" fill="#141e2c"/>
<rect x="8" y="8" width="6" height="1.1" fill="#2f5f92"/><rect x="8" y="10.2" width="6" height="1.1" fill="#2f5f92"/><rect x="8" y="12.2" width="5" height="0.9" fill="#2f5f92"/></svg>
<div class="t" style="left:24px;top:239px;transform:scaleX(0.9943);transform-origin:0 0;">Fabrizio.Logiurato.Do...</div>
<div class="t" style="right:1150px;top:239px;transform:scaleX(0.9102);transform-origin:100% 0;">19 KB</div>
<div class="t" style="left:229px;top:239px;">OpenDocument T...</div>
<div class="t" style="left:348px;top:239px;transform:scaleX(0.9428);transform-origin:0 0;">1/21/2019  5:28:38 PM</div>
<svg style="position:absolute;left:6px;top:256px" width="16" height="16" viewBox="0 0 16 16"><defs><linearGradient id="og" x1="0" x2="1"><stop offset="0" stop-color="#8aa2bc"/><stop offset="1" stop-color="#c8d6e4"/></linearGradient></defs>
<rect x="4.5" y="1.5" width="11" height="13" fill="#f8fafc" stroke="#2a3a50"/>
<path d="M5 1.5h10.5v3.5c-2 1.5-4-0.5-6 0.5s-3 1.5-4.5 1z" fill="url(#og)"/>
<path d="M5 6.5c1.5 0.5 2.5-0.5 4.5-1s4 1 6-0.5" stroke="#4a6078" stroke-width="0.8" fill="none"/>
<rect x="3" y="1" width="2.5" height="15" fill="#141e2c"/><rect x="3" y="13.6" width="12.5" height="2.2" fill="#141e2c"/>
<rect x="8" y="8" width="6" height="1.1" fill="#2f5f92"/><rect x="8" y="10.2" width="6" height="1.1" fill="#2f5f92"/><rect x="8" y="12.2" width="5" height="0.9" fill="#2f5f92"/></svg>
<div class="t" style="left:24px;top:258px;transform:scaleX(0.9879);transform-origin:0 0;">elena.perez.odt</div>
<div class="t" style="right:1150px;top:258px;transform:scaleX(0.9102);transform-origin:100% 0;">18 KB</div>
<div class="t" style="left:229px;top:258px;">OpenDocument T...</div>
<div class="t" style="left:348px;top:258px;transform:scaleX(0.9428);transform-origin:0 0;">1/21/2019  5:24:24 PM</div>
<svg style="position:absolute;left:6px;top:275px" width="16" height="16" viewBox="0 0 16 16"><defs><linearGradient id="og" x1="0" x2="1"><stop offset="0" stop-color="#8aa2bc"/><stop offset="1" stop-color="#c8d6e4"/></linearGradient></defs>
<rect x="4.5" y="1.5" width="11" height="13" fill="#f8fafc" stroke="#2a3a50"/>
<path d="M5 1.5h10.5v3.5c-2 1.5-4-0.5-6 0.5s-3 1.5-4.5 1z" fill="url(#og)"/>
<path d="M5 6.5c1.5 0.5 2.5-0.5 4.5-1s4 1 6-0.5" stroke="#4a6078" stroke-width="0.8" fill="none"/>
<rect x="3" y="1" width="2.5" height="15" fill="#141e2c"/><rect x="3" y="13.6" width="12.5" height="2.2" fill="#141e2c"/>
<rect x="8" y="8" width="6" height="1.1" fill="#2f5f92"/><rect x="8" y="10.2" width="6" height="1.1" fill="#2f5f92"/><rect x="8" y="12.2" width="5" height="0.9" fill="#2f5f92"/></svg>
<div class="t" style="left:24px;top:277px;">Donato.odt</div>
<div class="t" style="right:1150px;top:277px;transform:scaleX(0.9102);transform-origin:100% 0;">20 KB</div>
<div class="t" style="left:229px;top:277px;">OpenDocument T...</div>
<div class="t" style="left:348px;top:277px;transform:scaleX(0.9428);transform-origin:0 0;">1/21/2019  1:10:45 PM</div>
<svg style="position:absolute;left:6px;top:294px" width="16" height="16" viewBox="0 0 16 16"><path d="M3.5 1.5h8.5l2.5 2.5v11.5h-11z" fill="#fdfdfe" stroke="#858b94"/>
<path d="M12 1.5v2.5h2.5" fill="#eceef0" stroke="#858b94"/>
<path d="M4.5 3.2q1-1.2 2 0t2 0 2 0" stroke="#8a9098" stroke-width="0.8" fill="none"/>
<g fill="#aab6c4"><rect x="4" y="5" width="10" height="1"/><rect x="4" y="7" width="10" height="1"/><rect x="4" y="9" width="10" height="1"/><rect x="4" y="11" width="10" height="1"/><rect x="4" y="13" width="10" height="1"/></g></svg>
<div class="t" style="left:24px;top:296px;transform:scaleX(0.9707);transform-origin:0 0;">2move.csv</div>
<div class="t" style="right:1150px;top:296px;transform:scaleX(0.9051);transform-origin:100% 0;">1 KB</div>
<div class="t" style="left:229px;top:296px;transform:scaleX(0.9400);transform-origin:0 0;">CSV File</div>
<div class="t" style="left:348px;top:296px;transform:scaleX(0.9428);transform-origin:0 0;">1/31/2019  6:38:15 PM</div>
<div class="t" style="left:3px;top:546px;transform:scaleX(0.9368);transform-origin:0 0;">0 B of 57.0 KB in 0 of 5</div>
<div class="t" style="right:689px;top:546px;transform:scaleX(0.9928);transform-origin:100% 0;">4 hidden</div>
<svg style="position:absolute;left:689px;top:104px" width="3" height="15" viewBox="0 0 3 15"><rect x="0" y="0" width="3" height="1" fill="#a9a9a9"/><rect x="0" y="2" width="3" height="1" fill="#a9a9a9"/><rect x="0" y="4" width="3" height="1" fill="#a9a9a9"/><rect x="0" y="6" width="3" height="1" fill="#a9a9a9"/><rect x="0" y="8" width="3" height="1" fill="#a9a9a9"/><rect x="0" y="10" width="3" height="1" fill="#a9a9a9"/><rect x="0" y="12" width="3" height="1" fill="#a9a9a9"/><rect x="0" y="14" width="3" height="1" fill="#a9a9a9"/></svg>
<div style="position:absolute;left:694px;top:101px;width:114px;height:21px;background:#fff"></div>
<div style="position:absolute;left:796px;top:101px;width:12px;height:21px;background:#f3f3f3"></div>
<svg style="position:absolute;left:696px;top:103px" width="16" height="16" viewBox="0 0 16 16"><defs><linearGradient id="fgL" x1="0" x2="1"><stop offset="0" stop-color="#f2dc8a"/><stop offset="0.5" stop-color="#fcf0b8"/><stop offset="1" stop-color="#f4e096"/></linearGradient>
<linearGradient id="fgR" x1="0" x2="1"><stop offset="0" stop-color="#f8e8a2"/><stop offset="1" stop-color="#dcbc52"/></linearGradient></defs>
<path d="M2 1.5q0-1 1-1h3.5v15h-3.5q-1 0-1-1z" fill="url(#fgL)" stroke="#d8c070" stroke-width="0.7"/>
<path d="M6.3 0.5h6v14.5h-6z" fill="url(#fgR)" stroke="#d2b458" stroke-width="0.7"/>
<path d="M6.3 0.5v15" stroke="#c4a043" stroke-width="0.9"/>
<path d="M12.3 6.5h0.9v5h-0.9z" fill="#a88a3a"/>
<path d="M7 12.5h5v2.3H7z" fill="#d8d070" opacity="0.55"/></svg>
<div class="t" style="left:714px;top:105px;transform:scaleX(0.9524);transform-origin:0 0;">zipFilesEcuado</div>
<svg style="position:absolute;left:798px;top:111px" width="5" height="3" viewBox="0 0 5 3"><path d="M0 0H5L2.5 3Z" fill="#000"/></svg>
<svg style="position:absolute;left:812px;top:103px" width="17" height="16" viewBox="0 0 17 16"><path d="M1 5h5l1 1h6v8H1z" fill="#e6bb3c" stroke="#b08a20" stroke-width="0.7"/>
<path d="M1 14l2.5-6h13l-3 6z" fill="#f7d86a" stroke="#b08a20" stroke-width="0.7"/>
<path d="M8 6c1-3 3-4 5-4v-1.5l3.5 2.5-3.5 2.5v-1.5c-2 0-3.5 1-5 2z" fill="#3cb03c" stroke="#1e7a1e" stroke-width="0.6"/></svg>
<svg style="position:absolute;left:834px;top:104px" width="16" height="15" viewBox="0 0 16 15"><rect x="0.5" y="0.5" width="15" height="14" fill="#eaf2fb" stroke="#1d4e89"/>
<rect x="0.5" y="0.5" width="15" height="2" fill="#1d4e89"/>
<path d="M3.5 4.5h9l-3.5 4v4l-2 -1v-3z" fill="#cfe0f3" stroke="#333" stroke-width="0.8"/></svg>
<svg style="position:absolute;left:864px;top:104px" width="3" height="14" viewBox="0 0 3 14"><rect x="0" y="0" width="3" height="1" fill="#a9a9a9"/><rect x="0" y="2" width="3" height="1" fill="#a9a9a9"/><rect x="0" y="4" width="3" height="1" fill="#a9a9a9"/><rect x="0" y="6" width="3" height="1" fill="#a9a9a9"/><rect x="0" y="8" width="3" height="1" fill="#a9a9a9"/><rect x="0" y="10" width="3" height="1" fill="#a9a9a9"/><rect x="0" y="12" width="3" height="1" fill="#a9a9a9"/></svg>
<svg style="position:absolute;left:868px;top:105px" width="17" height="12" viewBox="0 0 17 12"><path d="M0.5 6l6-5v3h9v4h-9v3z" fill="#d3d3d3" stroke="#c4c4c4"/></svg>
<svg style="position:absolute;left:891px;top:110px" width="5" height="3" viewBox="0 0 5 3"><path d="M0 0H5L2.5 3Z" fill="#c0c0c0"/></svg>
<svg style="position:absolute;left:903px;top:105px" width="17" height="12" viewBox="0 0 17 12"><path d="M16.5 6l-6-5v3h-9v4h9v3z" fill="#d3d3d3" stroke="#c4c4c4"/></svg>
<svg style="position:absolute;left:926px;top:110px" width="5" height="3" viewBox="0 0 5 3"><path d="M0 0H5L2.5 3Z" fill="#c0c0c0"/></svg>
<svg style="position:absolute;left:941px;top:104px" width="3" height="14" viewBox="0 0 3 14"><rect x="0" y="0" width="3" height="1" fill="#a9a9a9"/><rect x="0" y="2" width="3" height="1" fill="#a9a9a9"/><rect x="0" y="4" width="3" height="1" fill="#a9a9a9"/><rect x="0" y="6" width="3" height="1" fill="#a9a9a9"/><rect x="0" y="8" width="3" height="1" fill="#a9a9a9"/><rect x="0" y="10" width="3" height="1" fill="#a9a9a9"/><rect x="0" y="12" width="3" height="1" fill="#a9a9a9"/></svg>
<svg style="position:absolute;left:948px;top:104px" width="16" height="15" viewBox="0 0 16 15"><path d="M0.5 1.5h5l1.5 1.5h8.5v11.5h-15z" fill="#f9dc5e" stroke="#9a7a18"/>
<path d="M0.5 4.5h15" stroke="#9a7a18"/>
<path d="M2.3 9L4.5 6.3 6.7 9z" fill="#1a1a1a"/><path d="M4.5 8.5v3h6" stroke="#1a1a1a" stroke-width="1.4" fill="none"/></svg>
<svg style="position:absolute;left:971px;top:104px" width="16" height="15" viewBox="0 0 16 15"><path d="M0.5 1.5h5l1.5 1.5h8.5v11.5h-15z" fill="#f9dc5e" stroke="#9a7a18"/>
<path d="M0.5 4.5h15" stroke="#9a7a18"/><path d="M9 7l-2.5 5" stroke="#222" stroke-width="1.3"/></svg>
<svg style="position:absolute;left:994px;top:103px" width="16" height="16" viewBox="0 0 16 16"><path d="M8 1L1 7.5h2V15h10V7.5h2z" fill="#dcebf8" stroke="#4a6078" stroke-width="1.2"/>
<rect x="6.5" y="9" width="3.5" height="6" fill="#3a78c8"/></svg>
<svg style="position:absolute;left:1017px;top:103px" width="16" height="16" viewBox="0 0 16 16"><path d="M2 8c0-4 4-6.5 8-5l1.5-2v5.5h-5.5l2-2c-2.5-1-5 1-5 3.5z" fill="#bdbdbd" stroke="#9a9a9a" stroke-width="0.7"/>
<path d="M14 8c0 4-4 6.5-8 5l-1.5 2v-5.5h5.5l-2 2c2.5 1 5-1 5-3.5z" fill="#bdbdbd" stroke="#9a9a9a" stroke-width="0.7"/></svg>
<div style="position:absolute;left:1040px;top:100px;width:1px;height:22px;background:#c6c6c6"></div>
<div style="position:absolute;left:1041px;top:100px;width:1px;height:22px;background:#fbfbfb"></div>
<svg style="position:absolute;left:1045px;top:103px" width="17" height="17" viewBox="0 0 17 17"><rect x="0.5" y="1.5" width="11" height="13" fill="#f7f9fc" stroke="#6a86a8"/>
<circle cx="8" cy="8" r="4" fill="#d8ecfa" stroke="#333" stroke-width="1.2"/>
<path d="M11 11l4.5 4.5" stroke="#333" stroke-width="2"/></svg>
<div class="t" style="left:1067px;top:105px;transform:scaleX(0.9612);transform-origin:0 0;">Find Files</div>
<div style="position:absolute;left:1124px;top:100px;width:1px;height:22px;background:#c6c6c6"></div>
<div style="position:absolute;left:1125px;top:100px;width:1px;height:22px;background:#fbfbfb"></div>
<svg style="position:absolute;left:1130px;top:103px" width="17" height="16" viewBox="0 0 17 16"><path d="M0.7 1.2h2.5l0.8 0.8h3.5v4.8H0.7z" fill="#f8e07a" stroke="#8a7020" stroke-width="1.1"/><path d="M0.7 2.8h6.8" stroke="#c0a030" stroke-width="0.6"/>
<path d="M8.7 9.2h2.5l0.8 0.8h3.5v4.8H8.7z" fill="#f8e07a" stroke="#8a7020" stroke-width="1.1"/><path d="M8.7 10.8h6.8" stroke="#c0a030" stroke-width="0.6"/>
<g fill="#000"><rect x="3" y="7.5" width="1" height="1"/><rect x="3" y="9.5" width="1" height="1"/><rect x="3" y="11.5" width="1" height="1"/><rect x="5" y="11.5" width="1" height="1"/><rect x="7" y="11.5" width="1" height="1"/></g></svg>
<svg style="position:absolute;left:689px;top:131px" width="3" height="13" viewBox="0 0 3 13"><rect x="0" y="0" width="3" height="1" fill="#a9a9a9"/><rect x="0" y="2" width="3" height="1" fill="#a9a9a9"/><rect x="0" y="4" width="3" height="1" fill="#a9a9a9"/><rect x="0" y="6" width="3" height="1" fill="#a9a9a9"/><rect x="0" y="8" width="3" height="1" fill="#a9a9a9"/><rect x="0" y="10" width="3" height="1" fill="#a9a9a9"/><rect x="0" y="12" width="3" height="1" fill="#a9a9a9"/></svg>
<svg style="position:absolute;left:696px;top:129px" width="17" height="17" viewBox="0 0 17 17"><path d="M4.5 0.5h6l3 3v8h-9z" fill="#eef3f8" stroke="#5b7fa8"/>
<path d="M1.5 3.5h6l3 3v9.5h-9z" fill="#f6f9fc" stroke="#4d74a0"/>
<g fill="#4d74a0"><rect x="3" y="7" width="3" height="1"/><rect x="3" y="9" width="5" height="1"/><rect x="3" y="11" width="5" height="1"/><rect x="3" y="13" width="5" height="1"/></g>
<path d="M7 8h8.5v8.5H7z" fill="#36a846" stroke="#1e7a2c" stroke-width="0.7"/><path d="M9.5 9.5h3.5v3h1.6l-3.3 3-3.3-3h1.5z" fill="#e8ffe8"/></svg>
<div class="t" style="left:717px;top:131px;">Download</div>
<svg style="position:absolute;left:778px;top:137px" width="5" height="3" viewBox="0 0 5 3"><path d="M0 0H5L2.5 3Z" fill="#000"/></svg>
<div style="position:absolute;left:790px;top:127px;width:1px;height:21px;background:#c6c6c6"></div>
<div style="position:absolute;left:791px;top:127px;width:1px;height:21px;background:#fbfbfb"></div>
<svg style="position:absolute;left:797px;top:129px" width="17" height="17" viewBox="0 0 17 17"><rect x="0.5" y="3.5" width="12" height="13" fill="#f7f9fc" stroke="#6a86a8"/>
<g fill="#9ab"><rect x="2" y="7" width="5" height="1"/><rect x="2" y="9" width="4" height="1"/><rect x="2" y="11" width="4" height="1"/></g>
<path d="M6 13l1-3.5 8-8 2.2 2.2-8 8z" fill="#f3b43a" stroke="#8a5a10" stroke-width="0.8"/></svg>
<div class="t" style="left:818px;top:131px;transform:scaleX(0.9697);transform-origin:0 0;">Edit</div>
<svg style="position:absolute;left:845px;top:137px" width="5" height="3" viewBox="0 0 5 3"><path d="M0 0H5L2.5 3Z" fill="#000"/></svg>
<svg style="position:absolute;left:859px;top:131px" width="15" height="15" viewBox="0 0 15 15"><path d="M2.3 2.3L12.7 12.7M12.7 2.3L2.3 12.7" stroke="#d81e1e" stroke-width="3.6" stroke-linecap="round"/></svg>
<svg style="position:absolute;left:880px;top:129px" width="17" height="17" viewBox="0 0 17 17"><rect x="0.5" y="9.5" width="13" height="6" fill="#fbfbfb" stroke="#4a6a90"/>
<text x="2" y="15" font-size="6" fill="#4a6a90" font-family="Liberation Sans">x|</text>
<path d="M7 10l1-3 6-6 2 2-6 6z" fill="#f3b43a" stroke="#4a6a90" stroke-width="0.7"/></svg>
<svg style="position:absolute;left:903px;top:129px" width="17" height="17" viewBox="0 0 17 17"><rect x="0.5" y="0.5" width="10" height="13" fill="#fbfbfb" stroke="#4a6a90"/>
<rect x="6.5" y="6.5" width="9" height="9" fill="#fbfbfb" stroke="#4a6a90"/>
<path d="M8.5 11l2 2 4-5" stroke="#2e9e3a" stroke-width="1.5" fill="none"/></svg>
<div class="t" style="left:925px;top:131px;transform:scaleX(0.9644);transform-origin:0 0;">Properties</div>
<div style="position:absolute;left:986px;top:127px;width:1px;height:21px;background:#c6c6c6"></div>
<div style="position:absolute;left:987px;top:127px;width:1px;height:21px;background:#fbfbfb"></div>
<svg style="position:absolute;left:992px;top:129px" width="16" height="16" viewBox="0 0 16 16"><path d="M0.5 4.5h5l1 1h6v9h-12z" fill="#f5d463" stroke="#9a7a18"/>
<path d="M0.5 7.5h12" stroke="#9a7a18"/>
<circle cx="12" cy="4" r="3" fill="#c8d4e0" stroke="#7a8a9a"/><circle cx="12" cy="4" r="1.2" fill="#fff"/></svg>
<div class="t" style="left:1014px;top:131px;transform:scaleX(0.9636);transform-origin:0 0;">New</div>
<svg style="position:absolute;left:1043px;top:137px" width="5" height="3" viewBox="0 0 5 3"><path d="M0 0H5L2.5 3Z" fill="#000"/></svg>
<svg style="position:absolute;left:1057px;top:131px" width="3" height="13" viewBox="0 0 3 13"><rect x="0" y="0" width="3" height="1" fill="#a9a9a9"/><rect x="0" y="2" width="3" height="1" fill="#a9a9a9"/><rect x="0" y="4" width="3" height="1" fill="#a9a9a9"/><rect x="0" y="6" width="3" height="1" fill="#a9a9a9"/><rect x="0" y="8" width="3" height="1" fill="#a9a9a9"/><rect x="0" y="10" width="3" height="1" fill="#a9a9a9"/><rect x="0" y="12" width="3" height="1" fill="#a9a9a9"/></svg>
<svg style="position:absolute;left:1065px;top:130px" width="15" height="15" viewBox="0 0 15 15"><rect x="0.5" y="0.5" width="14" height="14" fill="#f2f6fb" stroke="#345d91"/>
<path d="M7.5 3v9M3 7.5h9" stroke="#345d91" stroke-width="2"/></svg>
<svg style="position:absolute;left:1088px;top:130px" width="15" height="15" viewBox="0 0 15 15"><rect x="0.5" y="0.5" width="14" height="14" fill="#f2f6fb" stroke="#345d91"/>
<path d="M3 7.5h9" stroke="#345d91" stroke-width="2"/></svg>
<svg style="position:absolute;left:1111px;top:130px" width="15" height="15" viewBox="0 0 15 15"><rect x="0.5" y="0.5" width="14" height="14" fill="#f2f6fb" stroke="#345d91"/>
<path d="M3 3h9l-4.5 9z" fill="none" stroke="#345d91" stroke-width="1.6"/></svg>
<div style="position:absolute;left:685px;top:172px;width:680px;height:369px;background:#fff;border:1px solid #828790;box-sizing:border-box"></div>
<div style="position:absolute;left:686px;top:197px;width:662px;height:1px;background:#e5e5e5"></div>
<div style="position:absolute;left:836px;top:173px;width:1px;height:367px;background:#f0f0f0"></div>
<div style="position:absolute;left:907px;top:173px;width:1px;height:367px;background:#f0f0f0"></div>
<div style="position:absolute;left:1057px;top:173px;width:1px;height:367px;background:#f0f0f0"></div>
<div style="position:absolute;left:1136px;top:173px;width:1px;height:367px;background:#f0f0f0"></div>
<div style="position:absolute;left:1197px;top:173px;width:1px;height:367px;background:#f0f0f0"></div>
<svg style="position:absolute;left:979px;top:175px" width="7" height="4" viewBox="0 0 7 4"><path d="M0 0h7l-3.5 4z" fill="#7a9cc0"/></svg>
<div class="t" style="left:693px;top:179px;transform:scaleX(0.9740);transform-origin:0 0;">Name</div>
<div class="t" style="right:465px;top:179px;transform:scaleX(0.9469);transform-origin:100% 0;">Size</div>
<div class="t" style="left:913px;top:179px;transform:scaleX(0.9830);transform-origin:0 0;">Changed</div>
<div class="t" style="left:1063px;top:179px;transform:scaleX(0.9796);transform-origin:0 0;">Rights</div>
<div class="t" style="left:1142px;top:179px;transform:scaleX(0.9838);transform-origin:0 0;">Owner</div>
<div style="position:absolute;left:1348px;top:173px;width:16px;height:367px;background:#f0f0f0"></div>
<svg style="position:absolute;left:1351px;top:179px" width="9" height="7" viewBox="0 0 9 7"><path d="M1 5.5l3.5-3.5 3.5 3.5" stroke="#505050" stroke-width="2.2" fill="none"/></svg>
<svg style="position:absolute;left:1351px;top:528px" width="9" height="7" viewBox="0 0 9 7"><path d="M1 1.5l3.5 3.5 3.5-3.5" stroke="#505050" stroke-width="2.2" fill="none"/></svg>
<div style="position:absolute;left:1348px;top:328px;width:15px;height:122px;background:#cdcdcd"></div>
<svg style="position:absolute;left:691px;top:199px" width="16" height="16" viewBox="0 0 16 16"><defs><linearGradient id="fgL" x1="0" x2="1"><stop offset="0" stop-color="#f2dc8a"/><stop offset="0.5" stop-color="#fcf0b8"/><stop offset="1" stop-color="#f4e096"/></linearGradient>
<linearGradient id="fgR" x1="0" x2="1"><stop offset="0" stop-color="#f8e8a2"/><stop offset="1" stop-color="#dcbc52"/></linearGradient></defs>
<path d="M2 1.5q0-1 1-1h3.5v15h-3.5q-1 0-1-1z" fill="url(#fgL)" stroke="#d8c070" stroke-width="0.7"/>
<path d="M6.3 0.5h6v14.5h-6z" fill="url(#fgR)" stroke="#d2b458" stroke-width="0.7"/>
<path d="M6.3 0.5v15" stroke="#c4a043" stroke-width="0.9"/>
<path d="M12.3 6.5h0.9v5h-0.9z" fill="#a88a3a"/>
<path d="M7 12.5h5v2.3H7z" fill="#d8d070" opacity="0.55"/></svg>
<div class="t" style="left:709px;top:201px;transform:scaleX(0.9891);transform-origin:0 0;">batch</div>
<div class="t" style="left:913px;top:201px;transform:scaleX(0.9544);transform-origin:0 0;">12/14/2018 10:11:43 AM</div>
<div class="t" style="left:1063px;top:201px;">rwxrwxr-x</div>
<div class="t" style="left:1142px;top:201px;transform:scaleX(1.0257);transform-origin:0 0;">admin-...</div>
<svg style="position:absolute;left:691px;top:218px" width="16" height="16" viewBox="0 0 16 16"><defs><linearGradient id="fgL" x1="0" x2="1"><stop offset="0" stop-color="#f2dc8a"/><stop offset="0.5" stop-color="#fcf0b8"/><stop offset="1" stop-color="#f4e096"/></linearGradient>
<linearGradient id="fgR" x1="0" x2="1"><stop offset="0" stop-color="#f8e8a2"/><stop offset="1" stop-color="#dcbc52"/></linearGradient></defs>
<path d="M2 1.5q0-1 1-1h3.5v15h-3.5q-1 0-1-1z" fill="url(#fgL)" stroke="#d8c070" stroke-width="0.7"/>
<path d="M6.3 0.5h6v14.5h-6z" fill="url(#fgR)" stroke="#d2b458" stroke-width="0.7"/>
<path d="M6.3 0.5v15" stroke="#c4a043" stroke-width="0.9"/>
<path d="M12.3 6.5h0.9v5h-0.9z" fill="#a88a3a"/>
<path d="M7 12.5h5v2.3H7z" fill="#d8d070" opacity="0.55"/></svg>
<div class="t" style="left:709px;top:220px;transform:scaleX(1.0141);transform-origin:0 0;">oldUpload</div>
<div class="t" style="left:913px;top:220px;transform:scaleX(0.9544);transform-origin:0 0;">12/14/2018 10:11:39 AM</div>
<div class="t" style="left:1063px;top:220px;">rwxrwxr-x</div>
<div class="t" style="left:1142px;top:220px;transform:scaleX(1.0257);transform-origin:0 0;">admin-...</div>
<svg style="position:absolute;left:691px;top:237px" width="16" height="16" viewBox="0 0 16 16"><defs><linearGradient id="fgL" x1="0" x2="1"><stop offset="0" stop-color="#f2dc8a"/><stop offset="0.5" stop-color="#fcf0b8"/><stop offset="1" stop-color="#f4e096"/></linearGradient>
<linearGradient id="fgR" x1="0" x2="1"><stop offset="0" stop-color="#f8e8a2"/><stop offset="1" stop-color="#dcbc52"/></linearGradient></defs>
<path d="M2 1.5q0-1 1-1h3.5v15h-3.5q-1 0-1-1z" fill="url(#fgL)" stroke="#d8c070" stroke-width="0.7"/>
<path d="M6.3 0.5h6v14.5h-6z" fill="url(#fgR)" stroke="#d2b458" stroke-width="0.7"/>
<path d="M6.3 0.5v15" stroke="#c4a043" stroke-width="0.9"/>
<path d="M12.3 6.5h0.9v5h-0.9z" fill="#a88a3a"/>
<path d="M7 12.5h5v2.3H7z" fill="#d8d070" opacity="0.55"/></svg>
<div class="t" style="left:709px;top:239px;transform:scaleX(0.9124);transform-origin:0 0;">ESPAC</div>
<div class="t" style="left:913px;top:239px;transform:scaleX(0.9544);transform-origin:0 0;">12/14/2018 10:11:39 AM</div>
<div class="t" style="left:1063px;top:239px;">rwxrwxr-x</div>
<div class="t" style="left:1142px;top:239px;transform:scaleX(1.0257);transform-origin:0 0;">admin-...</div>
<svg style="position:absolute;left:691px;top:256px" width="16" height="16" viewBox="0 0 16 16"><defs><linearGradient id="fgL" x1="0" x2="1"><stop offset="0" stop-color="#f2dc8a"/><stop offset="0.5" stop-color="#fcf0b8"/><stop offset="1" stop-color="#f4e096"/></linearGradient>
<linearGradient id="fgR" x1="0" x2="1"><stop offset="0" stop-color="#f8e8a2"/><stop offset="1" stop-color="#dcbc52"/></linearGradient></defs>
<path d="M2 1.5q0-1 1-1h3.5v15h-3.5q-1 0-1-1z" fill="url(#fgL)" stroke="#d8c070" stroke-width="0.7"/>
<path d="M6.3 0.5h6v14.5h-6z" fill="url(#fgR)" stroke="#d2b458" stroke-width="0.7"/>
<path d="M6.3 0.5v15" stroke="#c4a043" stroke-width="0.9"/>
<path d="M12.3 6.5h0.9v5h-0.9z" fill="#a88a3a"/>
<path d="M7 12.5h5v2.3H7z" fill="#d8d070" opacity="0.55"/></svg>
<div class="t" style="left:709px;top:258px;">batchDictionary</div>
<div class="t" style="left:913px;top:258px;transform:scaleX(0.9544);transform-origin:0 0;">12/14/2018 10:11:39 AM</div>
<div class="t" style="left:1063px;top:258px;">rwxrwxr-x</div>
<div class="t" style="left:1142px;top:258px;transform:scaleX(1.0257);transform-origin:0 0;">admin-...</div>
<div style="position:absolute;left:691px;top:274px;width:144px;height:19px;background:#d3eafb;border:1px solid #6d9fc6;box-sizing:border-box"></div>
<div style="position:absolute;left:708px;top:275px;width:123px;height:17px;border:1px dotted #000;box-sizing:border-box"></div>
<svg style="position:absolute;left:691px;top:275px" width="16" height="17" viewBox="0 0 16 17"><rect x="2.5" y="0.5" width="11" height="12.5" fill="#dcebf9" stroke="#4f74a4" stroke-width="0.9"/>
<rect x="2.5" y="0.5" width="11" height="1.3" fill="#4f74a4"/>
<rect x="3.6" y="2.4" width="8.8" height="8.8" fill="#f2f8fd"/>
<circle cx="5.8" cy="5.6" r="1.5" fill="#e8a878"/><path d="M4.3 8.2q1.5-2.6 3 0" fill="#e09a68"/>
<rect x="8.3" y="3.8" width="3.4" height="1" fill="#4a84c8"/><rect x="8.3" y="5.6" width="3.4" height="1" fill="#4a84c8"/><rect x="4.2" y="9.3" width="7.5" height="0.7" fill="#a8c0dc"/>
<path d="M0.9 13.4L2.6 10.8H13.4L15.1 13.4Z" fill="#d4e6f6" stroke="#4f74a4" stroke-width="0.8"/>
<rect x="2.8" y="14" width="10.4" height="1.9" fill="#4a7cb4"/></svg>
<div class="t" style="left:709px;top:277px;transform:scaleX(0.9832);transform-origin:0 0;">countFieldHash.test.pl</div>
<div class="t" style="right:467px;top:277px;transform:scaleX(0.9051);transform-origin:100% 0;">4 KB</div>
<div class="t" style="left:913px;top:277px;transform:scaleX(0.9499);transform-origin:0 0;">3/3/2019 12:48:53 AM</div>
<div class="t" style="left:1063px;top:277px;transform:scaleX(1.0753);transform-origin:0 0;">rw-rw-r--</div>
<div class="t" style="left:1142px;top:277px;transform:scaleX(1.0257);transform-origin:0 0;">admin-...</div>
<svg style="position:absolute;left:691px;top:294px" width="16" height="16" viewBox="0 0 16 16"><path d="M2.5 1.5h8.5l2.5 2.5v11.5h-11z" fill="#fcfcfd" stroke="#8c9096"/>
<path d="M11 1.5v2.5h2.5" fill="#f0f0f0" stroke="#8c9096"/></svg>
<div class="t" style="left:709px;top:296px;transform:scaleX(1.0150);transform-origin:0 0;">nohup.out</div>
<div class="t" style="right:467px;top:296px;transform:scaleX(0.9051);transform-origin:100% 0;">1 KB</div>
<div class="t" style="left:913px;top:296px;transform:scaleX(0.9446);transform-origin:0 0;">3/2/2019 12:44:41 PM</div>
<div class="t" style="left:1063px;top:296px;transform:scaleX(1.1659);transform-origin:0 0;">rw-------</div>
<div class="t" style="left:1142px;top:296px;transform:scaleX(1.0257);transform-origin:0 0;">admin-...</div>
<svg style="position:absolute;left:691px;top:313px" width="16" height="16" viewBox="0 0 16 16"><path d="M3.5 1.5h8.5l2.5 2.5v11.5h-11z" fill="#fdfdfe" stroke="#858b94"/>
<path d="M12 1.5v2.5h2.5" fill="#eceef0" stroke="#858b94"/>
<path d="M4.5 3.2q1-1.2 2 0t2 0 2 0" stroke="#8a9098" stroke-width="0.8" fill="none"/>
<g fill="#aab6c4"><rect x="4" y="5" width="10" height="1"/><rect x="4" y="7" width="10" height="1"/><rect x="4" y="9" width="10" height="1"/><rect x="4" y="11" width="10" height="1"/><rect x="4" y="13" width="10" height="1"/></g></svg>
<div class="t" style="left:709px;top:315px;transform:scaleX(0.9869);transform-origin:0 0;">label_matching.test.txt</div>
<div class="t" style="right:467px;top:315px;transform:scaleX(0.9051);transform-origin:100% 0;">0 KB</div>
<div class="t" style="left:913px;top:315px;transform:scaleX(0.9446);transform-origin:0 0;">3/2/2019 12:42:32 PM</div>
<div class="t" style="left:1063px;top:315px;transform:scaleX(1.0753);transform-origin:0 0;">rw-rw-r--</div>
<div class="t" style="left:1142px;top:315px;transform:scaleX(1.0257);transform-origin:0 0;">admin-...</div>
<svg style="position:absolute;left:691px;top:332px" width="16" height="17" viewBox="0 0 16 17"><rect x="2.5" y="0.5" width="11" height="12.5" fill="#dcebf9" stroke="#4f74a4" stroke-width="0.9"/>
<rect x="2.5" y="0.5" width="11" height="1.3" fill="#4f74a4"/>
<rect x="3.6" y="2.4" width="8.8" height="8.8" fill="#f2f8fd"/>
<circle cx="5.8" cy="5.6" r="1.5" fill="#e8a878"/><path d="M4.3 8.2q1.5-2.6 3 0" fill="#e09a68"/>
<rect x="8.3" y="3.8" width="3.4" height="1" fill="#4a84c8"/><rect x="8.3" y="5.6" width="3.4" height="1" fill="#4a84c8"/><rect x="4.2" y="9.3" width="7.5" height="0.7" fill="#a8c0dc"/>
<path d="M0.9 13.4L2.6 10.8H13.4L15.1 13.4Z" fill="#d4e6f6" stroke="#4f74a4" stroke-width="0.8"/>
<rect x="2.8" y="14" width="10.4" height="1.9" fill="#4a7cb4"/></svg>
<div class="t" style="left:709px;top:334px;transform:scaleX(0.9878);transform-origin:0 0;">countField.test.pl</div>
<div class="t" style="right:467px;top:334px;transform:scaleX(0.9051);transform-origin:100% 0;">3 KB</div>
<div class="t" style="left:913px;top:334px;transform:scaleX(0.9572);transform-origin:0 0;">3/1/2019 11:27:42 AM</div>
<div class="t" style="left:1063px;top:334px;transform:scaleX(1.0753);transform-origin:0 0;">rw-rw-r--</div>
<div class="t" style="left:1142px;top:334px;transform:scaleX(1.0257);transform-origin:0 0;">admin-...</div>
<svg style="position:absolute;left:691px;top:351px" width="16" height="17" viewBox="0 0 16 17"><rect x="2.5" y="0.5" width="11" height="12.5" fill="#dcebf9" stroke="#4f74a4" stroke-width="0.9"/>
<rect x="2.5" y="0.5" width="11" height="1.3" fill="#4f74a4"/>
<rect x="3.6" y="2.4" width="8.8" height="8.8" fill="#f2f8fd"/>
<circle cx="5.8" cy="5.6" r="1.5" fill="#e8a878"/><path d="M4.3 8.2q1.5-2.6 3 0" fill="#e09a68"/>
<rect x="8.3" y="3.8" width="3.4" height="1" fill="#4a84c8"/><rect x="8.3" y="5.6" width="3.4" height="1" fill="#4a84c8"/><rect x="4.2" y="9.3" width="7.5" height="0.7" fill="#a8c0dc"/>
<path d="M0.9 13.4L2.6 10.8H13.4L15.1 13.4Z" fill="#d4e6f6" stroke="#4f74a4" stroke-width="0.8"/>
<rect x="2.8" y="14" width="10.4" height="1.9" fill="#4a7cb4"/></svg>
<div class="t" style="left:709px;top:353px;transform:scaleX(0.9916);transform-origin:0 0;">countFieldHash.pl</div>
<div class="t" style="right:467px;top:353px;transform:scaleX(0.9051);transform-origin:100% 0;">4 KB</div>
<div class="t" style="left:913px;top:353px;transform:scaleX(0.9446);transform-origin:0 0;">2/28/2019 6:48:20 PM</div>
<div class="t" style="left:1063px;top:353px;transform:scaleX(1.0753);transform-origin:0 0;">rw-rw-r--</div>
<div class="t" style="left:1142px;top:353px;transform:scaleX(1.0257);transform-origin:0 0;">admin-...</div>
<svg style="position:absolute;left:691px;top:370px" width="16" height="16" viewBox="0 0 16 16"><path d="M3.5 1.5h8.5l2.5 2.5v11.5h-11z" fill="#fdfdfe" stroke="#858b94"/>
<path d="M12 1.5v2.5h2.5" fill="#eceef0" stroke="#858b94"/>
<path d="M4.5 3.2q1-1.2 2 0t2 0 2 0" stroke="#8a9098" stroke-width="0.8" fill="none"/>
<g fill="#aab6c4"><rect x="4" y="5" width="10" height="1"/><rect x="4" y="7" width="10" height="1"/><rect x="4" y="9" width="10" height="1"/><rect x="4" y="11" width="10" height="1"/><rect x="4" y="13" width="10" height="1"/></g></svg>
<div class="t" style="left:709px;top:372px;">label_matching.txt</div>
<div class="t" style="right:467px;top:372px;transform:scaleX(0.9051);transform-origin:100% 0;">0 KB</div>
<div class="t" style="left:913px;top:372px;transform:scaleX(0.9446);transform-origin:0 0;">2/28/2019 6:31:29 PM</div>
<div class="t" style="left:1063px;top:372px;transform:scaleX(1.0753);transform-origin:0 0;">rw-rw-r--</div>
<div class="t" style="left:1142px;top:372px;transform:scaleX(1.0257);transform-origin:0 0;">admin-...</div>
<svg style="position:absolute;left:691px;top:389px" width="16" height="16" viewBox="0 0 16 16"><path d="M3.5 1.5h8.5l2.5 2.5v11.5h-11z" fill="#fdfdfe" stroke="#858b94"/>
<path d="M12 1.5v2.5h2.5" fill="#eceef0" stroke="#858b94"/>
<path d="M4.5 3.2q1-1.2 2 0t2 0 2 0" stroke="#8a9098" stroke-width="0.8" fill="none"/>
<g fill="#aab6c4"><rect x="4" y="5" width="10" height="1"/><rect x="4" y="7" width="10" height="1"/><rect x="4" y="9" width="10" height="1"/><rect x="4" y="11" width="10" height="1"/><rect x="4" y="13" width="10" height="1"/></g></svg>
<div class="t" style="left:709px;top:391px;transform:scaleX(0.9726);transform-origin:0 0;">listHeaders.txt</div>
<div class="t" style="right:467px;top:391px;transform:scaleX(0.9102);transform-origin:100% 0;">14 KB</div>
<div class="t" style="left:913px;top:391px;transform:scaleX(0.9446);transform-origin:0 0;">2/28/2019 4:39:05 PM</div>
<div class="t" style="left:1063px;top:391px;transform:scaleX(1.0753);transform-origin:0 0;">rw-rw-r--</div>
<div class="t" style="left:1142px;top:391px;transform:scaleX(1.0257);transform-origin:0 0;">admin-...</div>
<svg style="position:absolute;left:691px;top:408px" width="16" height="17" viewBox="0 0 16 17"><rect x="2.5" y="0.5" width="11" height="12.5" fill="#dcebf9" stroke="#4f74a4" stroke-width="0.9"/>
<rect x="2.5" y="0.5" width="11" height="1.3" fill="#4f74a4"/>
<rect x="3.6" y="2.4" width="8.8" height="8.8" fill="#f2f8fd"/>
<circle cx="5.8" cy="5.6" r="1.5" fill="#e8a878"/><path d="M4.3 8.2q1.5-2.6 3 0" fill="#e09a68"/>
<rect x="8.3" y="3.8" width="3.4" height="1" fill="#4a84c8"/><rect x="8.3" y="5.6" width="3.4" height="1" fill="#4a84c8"/><rect x="4.2" y="9.3" width="7.5" height="0.7" fill="#a8c0dc"/>
<path d="M0.9 13.4L2.6 10.8H13.4L15.1 13.4Z" fill="#d4e6f6" stroke="#4f74a4" stroke-width="0.8"/>
<rect x="2.8" y="14" width="10.4" height="1.9" fill="#4a7cb4"/></svg>
<div class="t" style="left:709px;top:410px;transform:scaleX(0.9802);transform-origin:0 0;">countFieldSet.1.pl</div>
<div class="t" style="right:467px;top:410px;transform:scaleX(0.9051);transform-origin:100% 0;">2 KB</div>
<div class="t" style="left:913px;top:410px;transform:scaleX(0.9446);transform-origin:0 0;">2/28/2019 3:46:06 PM</div>
<div class="t" style="left:1063px;top:410px;transform:scaleX(1.0753);transform-origin:0 0;">rw-rw-r--</div>
<div class="t" style="left:1142px;top:410px;transform:scaleX(1.0257);transform-origin:0 0;">admin-...</div>
<svg style="position:absolute;left:691px;top:427px" width="16" height="17" viewBox="0 0 16 17"><rect x="2.5" y="0.5" width="11" height="12.5" fill="#dcebf9" stroke="#4f74a4" stroke-width="0.9"/>
<rect x="2.5" y="0.5" width="11" height="1.3" fill="#4f74a4"/>
<rect x="3.6" y="2.4" width="8.8" height="8.8" fill="#f2f8fd"/>
<circle cx="5.8" cy="5.6" r="1.5" fill="#e8a878"/><path d="M4.3 8.2q1.5-2.6 3 0" fill="#e09a68"/>
<rect x="8.3" y="3.8" width="3.4" height="1" fill="#4a84c8"/><rect x="8.3" y="5.6" width="3.4" height="1" fill="#4a84c8"/><rect x="4.2" y="9.3" width="7.5" height="0.7" fill="#a8c0dc"/>
<path d="M0.9 13.4L2.6 10.8H13.4L15.1 13.4Z" fill="#d4e6f6" stroke="#4f74a4" stroke-width="0.8"/>
<rect x="2.8" y="14" width="10.4" height="1.9" fill="#4a7cb4"/></svg>
<div class="t" style="left:709px;top:429px;transform:scaleX(0.9841);transform-origin:0 0;">countFieldSet.pl</div>
<div class="t" style="right:467px;top:429px;transform:scaleX(0.9051);transform-origin:100% 0;">3 KB</div>
<div class="t" style="left:913px;top:429px;transform:scaleX(0.9446);transform-origin:0 0;">2/26/2019 2:53:41 PM</div>
<div class="t" style="left:1063px;top:429px;transform:scaleX(1.0753);transform-origin:0 0;">rw-rw-r--</div>
<div class="t" style="left:1142px;top:429px;transform:scaleX(1.0257);transform-origin:0 0;">admin-...</div>
<svg style="position:absolute;left:691px;top:446px" width="16" height="17" viewBox="0 0 16 17"><rect x="2.5" y="0.5" width="11" height="12.5" fill="#dcebf9" stroke="#4f74a4" stroke-width="0.9"/>
<rect x="2.5" y="0.5" width="11" height="1.3" fill="#4f74a4"/>
<rect x="3.6" y="2.4" width="8.8" height="8.8" fill="#f2f8fd"/>
<circle cx="5.8" cy="5.6" r="1.5" fill="#e8a878"/><path d="M4.3 8.2q1.5-2.6 3 0" fill="#e09a68"/>
<rect x="8.3" y="3.8" width="3.4" height="1" fill="#4a84c8"/><rect x="8.3" y="5.6" width="3.4" height="1" fill="#4a84c8"/><rect x="4.2" y="9.3" width="7.5" height="0.7" fill="#a8c0dc"/>
<path d="M0.9 13.4L2.6 10.8H13.4L15.1 13.4Z" fill="#d4e6f6" stroke="#4f74a4" stroke-width="0.8"/>
<rect x="2.8" y="14" width="10.4" height="1.9" fill="#4a7cb4"/></svg>
<div class="t" style="left:709px;top:448px;">countField.pl</div>
<div class="t" style="right:467px;top:448px;transform:scaleX(0.9051);transform-origin:100% 0;">3 KB</div>
<div class="t" style="left:913px;top:448px;transform:scaleX(0.9446);transform-origin:0 0;">2/26/2019 2:26:34 PM</div>
<div class="t" style="left:1063px;top:448px;transform:scaleX(1.0753);transform-origin:0 0;">rw-rw-r--</div>
<div class="t" style="left:1142px;top:448px;transform:scaleX(1.0257);transform-origin:0 0;">admin-...</div>
<svg style="position:absolute;left:691px;top:465px" width="16" height="17" viewBox="0 0 16 17"><rect x="2.5" y="0.5" width="11" height="12.5" fill="#dcebf9" stroke="#4f74a4" stroke-width="0.9"/>
<rect x="2.5" y="0.5" width="11" height="1.3" fill="#4f74a4"/>
<rect x="3.6" y="2.4" width="8.8" height="8.8" fill="#f2f8fd"/>
<circle cx="5.8" cy="5.6" r="1.5" fill="#e8a878"/><path d="M4.3 8.2q1.5-2.6 3 0" fill="#e09a68"/>
<rect x="8.3" y="3.8" width="3.4" height="1" fill="#4a84c8"/><rect x="8.3" y="5.6" width="3.4" height="1" fill="#4a84c8"/><rect x="4.2" y="9.3" width="7.5" height="0.7" fill="#a8c0dc"/>
<path d="M0.9 13.4L2.6 10.8H13.4L15.1 13.4Z" fill="#d4e6f6" stroke="#4f74a4" stroke-width="0.8"/>
<rect x="2.8" y="14" width="10.4" height="1.9" fill="#4a7cb4"/></svg>
<div class="t" style="left:709px;top:467px;transform:scaleX(0.9865);transform-origin:0 0;">rosetta.alphabetic.pl</div>
<div class="t" style="right:467px;top:467px;transform:scaleX(0.9051);transform-origin:100% 0;">4 KB</div>
<div class="t" style="left:913px;top:467px;transform:scaleX(0.9446);transform-origin:0 0;">2/25/2019 4:26:03 PM</div>
<div class="t" style="left:1063px;top:467px;transform:scaleX(1.0753);transform-origin:0 0;">rw-rw-r--</div>
<div class="t" style="left:1142px;top:467px;transform:scaleX(1.0257);transform-origin:0 0;">admin-...</div>
<svg style="position:absolute;left:691px;top:484px" width="16" height="16" viewBox="0 0 16 16"><path d="M3.5 1.5h8.5l2.5 2.5v11.5h-11z" fill="#fdfdfe" stroke="#858b94"/>
<path d="M12 1.5v2.5h2.5" fill="#eceef0" stroke="#858b94"/>
<path d="M4.5 3.2q1-1.2 2 0t2 0 2 0" stroke="#8a9098" stroke-width="0.8" fill="none"/>
<g fill="#aab6c4"><rect x="4" y="5" width="10" height="1"/><rect x="4" y="7" width="10" height="1"/><rect x="4" y="9" width="10" height="1"/><rect x="4" y="11" width="10" height="1"/><rect x="4" y="13" width="10" height="1"/></g></svg>
<div class="t" style="left:709px;top:486px;transform:scaleX(0.9819);transform-origin:0 0;">labelsOrdered.txt</div>
<div class="t" style="right:467px;top:486px;transform:scaleX(0.9203);transform-origin:100% 0;">7,209 KB</div>
<div class="t" style="left:913px;top:486px;transform:scaleX(0.9446);transform-origin:0 0;">2/25/2019 1:51:40 PM</div>
<div class="t" style="left:1063px;top:486px;transform:scaleX(1.0753);transform-origin:0 0;">rw-rw-r--</div>
<div class="t" style="left:1142px;top:486px;transform:scaleX(1.0257);transform-origin:0 0;">admin-...</div>
<svg style="position:absolute;left:691px;top:503px" width="16" height="17" viewBox="0 0 16 17"><rect x="2.5" y="0.5" width="11" height="12.5" fill="#dcebf9" stroke="#4f74a4" stroke-width="0.9"/>
<rect x="2.5" y="0.5" width="11" height="1.3" fill="#4f74a4"/>
<rect x="3.6" y="2.4" width="8.8" height="8.8" fill="#f2f8fd"/>
<circle cx="5.8" cy="5.6" r="1.5" fill="#e8a878"/><path d="M4.3 8.2q1.5-2.6 3 0" fill="#e09a68"/>
<rect x="8.3" y="3.8" width="3.4" height="1" fill="#4a84c8"/><rect x="8.3" y="5.6" width="3.4" height="1" fill="#4a84c8"/><rect x="4.2" y="9.3" width="7.5" height="0.7" fill="#a8c0dc"/>
<path d="M0.9 13.4L2.6 10.8H13.4L15.1 13.4Z" fill="#d4e6f6" stroke="#4f74a4" stroke-width="0.8"/>
<rect x="2.8" y="14" width="10.4" height="1.9" fill="#4a7cb4"/></svg>
<div class="t" style="left:709px;top:505px;transform:scaleX(0.9742);transform-origin:0 0;">rosetta.inverseHash.pl</div>
<div class="t" style="right:467px;top:505px;transform:scaleX(0.9051);transform-origin:100% 0;">4 KB</div>
<div class="t" style="left:913px;top:505px;transform:scaleX(0.9438);transform-origin:0 0;">2/22/2019 12:37:08 PM</div>
<div class="t" style="left:1063px;top:505px;transform:scaleX(1.0753);transform-origin:0 0;">rw-rw-r--</div>
<div class="t" style="left:1142px;top:505px;transform:scaleX(1.0257);transform-origin:0 0;">admin-...</div>
<svg style="position:absolute;left:691px;top:522px" width="16" height="16" viewBox="0 0 16 16"><path d="M2.5 1.5h8.5l2.5 2.5v11.5h-11z" fill="#fcfcfd" stroke="#8c9096"/>
<path d="M11 1.5v2.5h2.5" fill="#f0f0f0" stroke="#8c9096"/></svg>
<div class="t" style="left:709px;top:524px;transform:scaleX(0.9929);transform-origin:0 0;">listVariables</div>
<div class="t" style="right:467px;top:524px;transform:scaleX(0.9203);transform-origin:100% 0;">1,837 KB</div>
<div class="t" style="left:913px;top:524px;transform:scaleX(0.9488);transform-origin:0 0;">2/22/2019 10:25:03 AM</div>
<div class="t" style="left:1063px;top:524px;transform:scaleX(1.0753);transform-origin:0 0;">rw-rw-r--</div>
<div class="t" style="left:1142px;top:524px;transform:scaleX(1.0257);transform-origin:0 0;">admin-...</div>
<div style="position:absolute;left:688px;top:198px;width:1px;height:342px;background:#e8ecf2"></div>
<div class="t" style="left:688px;top:546px;transform:scaleX(0.9409);transform-origin:0 0;">3.80 KB of 8.88 MB in 1 of 45</div>
<div class="t" style="right:4px;top:546px;transform:scaleX(0.9928);transform-origin:100% 0;">3 hidden</div>
<div style="position:absolute;left:0px;top:562px;width:1366px;height:1px;background:#a9a9a9"></div>
<div style="position:absolute;left:0px;top:563px;width:1366px;height:3px;background:#eaf0f6"></div>
<div style="position:absolute;left:0px;top:566px;width:1366px;height:21px;background:#bfcddb"></div>
<div class="t" style="left:5px;top:570px;transform:scaleX(0.9751);transform-origin:0 0;">Queue (1)</div>
<div style="position:absolute;left:2px;top:589px;width:23px;height:22px;background:#e3f1fb;border:1px solid #4f8fcb;box-sizing:border-box"></div>
<svg style="position:absolute;left:5px;top:591px" width="17" height="17" viewBox="0 0 17 17"><path d="M7.5 0.5h4l3 3v8h-7z" fill="#f6f8fb" stroke="#4a5566" stroke-width="0.9"/><path d="M4.5 2.5h4l3 3v8h-7z" fill="#f6f8fb" stroke="#4a5566" stroke-width="0.9"/>
<path d="M0.5 4.5h5l3 3v8.5h-8z" fill="#f8fafc" stroke="#4a5566" stroke-width="0.9"/><g fill="#4a5566"><rect x="2" y="7.5" width="2.5" height="0.9"/><rect x="2" y="9.5" width="4.5" height="0.9"/><rect x="2" y="11.5" width="4.5" height="0.9"/><rect x="2" y="13.5" width="4.5" height="0.9"/></g><path d="M8.5 7.5l6.5 4.5-6.5 4.5z" fill="#28a038" stroke="#1a7a26" stroke-width="0.6"/></svg>
<div style="position:absolute;left:28px;top:590px;width:1px;height:20px;background:#c6c6c6"></div>
<div style="position:absolute;left:29px;top:590px;width:1px;height:20px;background:#fbfbfb"></div>
<svg style="position:absolute;left:36px;top:592px" width="12" height="14" viewBox="0 0 12 14"><path d="M0 0l12 7-12 7z" fill="#c8c8c8"/></svg>
<svg style="position:absolute;left:58px;top:592px" width="15" height="15" viewBox="0 0 15 15"><path d="M2.3 2.3L12.7 12.7M12.7 2.3L2.3 12.7" stroke="#b8b8b8" stroke-width="3.6" stroke-linecap="round"/></svg>
<div style="position:absolute;left:80px;top:590px;width:1px;height:20px;background:#c6c6c6"></div>
<div style="position:absolute;left:81px;top:590px;width:1px;height:20px;background:#fbfbfb"></div>
<svg style="position:absolute;left:88px;top:591px" width="11" height="16" viewBox="0 0 11 16"><path d="M5.5 0.5l5 6.5H7.5v8.5h-4V7H0.5z" fill="#d4d4d4" stroke="#c4c4c4" stroke-width="0.6"/></svg>
<svg style="position:absolute;left:111px;top:591px" width="11" height="16" viewBox="0 0 11 16"><path d="M5.5 15.5l5-6.5H7.5V0.5h-4V9H0.5z" fill="#d4d4d4" stroke="#c4c4c4" stroke-width="0.6"/></svg>
<div style="position:absolute;left:132px;top:590px;width:1px;height:20px;background:#c6c6c6"></div>
<div style="position:absolute;left:133px;top:590px;width:1px;height:20px;background:#fbfbfb"></div>
<svg style="position:absolute;left:138px;top:591px" width="17" height="17" viewBox="0 0 17 17"><path d="M7.5 0.5h4l3 3v8h-7z" fill="#f6f8fb" stroke="#4a5566" stroke-width="0.9"/><path d="M4.5 2.5h4l3 3v8h-7z" fill="#f6f8fb" stroke="#4a5566" stroke-width="0.9"/>
<path d="M0.5 4.5h5l3 3v8.5h-8z" fill="#f8fafc" stroke="#4a5566" stroke-width="0.9"/><g fill="#4a5566"><rect x="2" y="7.5" width="2.5" height="0.9"/><rect x="2" y="9.5" width="4.5" height="0.9"/><rect x="2" y="11.5" width="4.5" height="0.9"/><rect x="2" y="13.5" width="4.5" height="0.9"/></g><circle cx="12" cy="12.5" r="3.8" fill="#3cc040" stroke="#1a7a26" stroke-width="0.8"/></svg>
<svg style="position:absolute;left:160px;top:598px" width="5" height="3" viewBox="0 0 5 3"><path d="M0 0H5L2.5 3Z" fill="#000"/></svg>
<svg style="position:absolute;left:173px;top:592px" width="16" height="16" viewBox="0 0 16 16"><path d="M6.98 2.70 L6.94 0.47 L9.06 0.47 L9.02 2.70 L10.07 3.01 L11.03 3.53 L12.57 1.93 L14.07 3.43 L12.47 4.97 L12.99 5.93 L13.30 6.98 L15.53 6.94 L15.53 9.06 L13.30 9.02 L12.99 10.07 L12.47 11.03 L14.07 12.57 L12.57 14.07 L11.03 12.47 L10.07 12.99 L9.02 13.30 L9.06 15.53 L6.94 15.53 L6.98 13.30 L5.93 12.99 L4.97 12.47 L3.43 14.07 L1.93 12.57 L3.53 11.03 L3.01 10.07 L2.70 9.02 L0.47 9.06 L0.47 6.94 L2.70 6.98 L3.01 5.93 L3.53 4.97 L1.93 3.43 L3.43 1.93 L4.97 3.53 L5.93 3.01Z" fill="#b2bac4" stroke="#5e6670" stroke-width="0.9"/><circle cx="8" cy="8" r="2.6" fill="#fff" stroke="#5e6670" stroke-width="1"/></svg>
<div style="position:absolute;left:0px;top:613px;width:1366px;height:93px;background:#fff;border:1px solid #828790;box-sizing:border-box"></div>
<div style="position:absolute;left:1px;top:637px;width:1365px;height:1px;background:#e5e5e5"></div>
<div style="position:absolute;left:71px;top:614px;width:1px;height:23px;background:#f0f0f0"></div>
<div style="position:absolute;left:321px;top:614px;width:1px;height:23px;background:#f0f0f0"></div>
<div style="position:absolute;left:572px;top:614px;width:1px;height:23px;background:#f0f0f0"></div>
<div style="position:absolute;left:652px;top:614px;width:1px;height:23px;background:#f0f0f0"></div>
<div style="position:absolute;left:732px;top:614px;width:1px;height:23px;background:#f0f0f0"></div>
<div style="position:absolute;left:811px;top:614px;width:1px;height:23px;background:#f0f0f0"></div>
<div style="position:absolute;left:911px;top:614px;width:1px;height:23px;background:#f0f0f0"></div>
<div class="t" style="left:8px;top:620px;transform:scaleX(0.9949);transform-origin:0 0;">Operation</div>
<div class="t" style="left:78px;top:620px;transform:scaleX(0.9688);transform-origin:0 0;">Source</div>
<div class="t" style="left:328px;top:620px;transform:scaleX(0.9886);transform-origin:0 0;">Destination</div>
<div class="t" style="right:720px;top:620px;transform:scaleX(0.9816);transform-origin:100% 0;">Transferred</div>
<div class="t" style="right:640px;top:620px;transform:scaleX(1.0111);transform-origin:100% 0;">Time</div>
<div class="t" style="right:560px;top:620px;transform:scaleX(0.9523);transform-origin:100% 0;">Speed</div>
<div class="t" style="left:838px;top:620px;transform:scaleX(0.9458);transform-origin:0 0;">Progress</div>
<svg style="position:absolute;left:6px;top:640px" width="16" height="17" viewBox="0 0 16 17"><path d="M7.5 0.5h4l3 3v8h-7z" fill="#e4eef9" stroke="#3a68a8" stroke-width="0.9"/><path d="M4.5 2.5h4l3 3v8h-7z" fill="#e4eef9" stroke="#3a68a8" stroke-width="0.9"/>
<path d="M0.5 4.5h5l3 3v8.5h-8z" fill="#f2f7fc" stroke="#3a68a8" stroke-width="0.9"/><g fill="#3a68a8"><rect x="2" y="7.5" width="2.5" height="0.9"/><rect x="2" y="9.5" width="4.5" height="0.9"/><rect x="2" y="11.5" width="4.5" height="0.9"/><rect x="2" y="13.5" width="4.5" height="0.9"/></g><path d="M8 8l6 6M14.5 9.5v5h-5" stroke="#2a78d0" stroke-width="2.2" fill="none"/></svg>
<div class="t" style="left:78px;top:642px;transform:scaleX(0.9832);transform-origin:0 0;">countFieldHash.test.pl</div>
<div class="t" style="left:328px;top:642px;">Temporary directory</div>
<div class="t" style="right:722px;top:642px;transform:scaleX(0.9203);transform-origin:100% 0;">2,991 KB</div>
<div class="t" style="right:642px;top:642px;transform:scaleX(0.9250);transform-origin:100% 0;">0:00:00</div>
<div class="t" style="right:562px;top:642px;transform:scaleX(0.9323);transform-origin:100% 0;">37.7 KB/s</div>
<div class="t" style="left:847px;top:642px;transform:scaleX(0.9474);transform-origin:0 0;">100%</div>
<div style="position:absolute;left:0px;top:708px;width:1366px;height:1px;background:#e6e6e6"></div>
<div style="position:absolute;left:1143px;top:709px;width:1px;height:18px;background:#dcdcdc"></div>
<div style="position:absolute;left:1144px;top:709px;width:1px;height:18px;background:#fafafa"></div>
<div style="position:absolute;left:1179px;top:709px;width:1px;height:18px;background:#dcdcdc"></div>
<div style="position:absolute;left:1180px;top:709px;width:1px;height:18px;background:#fafafa"></div>
<div style="position:absolute;left:1248px;top:709px;width:1px;height:18px;background:#dcdcdc"></div>
<div style="position:absolute;left:1249px;top:709px;width:1px;height:18px;background:#fafafa"></div>
<div style="position:absolute;left:1285px;top:709px;width:1px;height:18px;background:#dcdcdc"></div>
<div style="position:absolute;left:1286px;top:709px;width:1px;height:18px;background:#fafafa"></div>
<div style="position:absolute;left:1362px;top:709px;width:1px;height:18px;background:#dcdcdc"></div>
<div style="position:absolute;left:1363px;top:709px;width:1px;height:18px;background:#fafafa"></div>
<svg style="position:absolute;left:1154px;top:710px" width="14" height="16" viewBox="0 0 14 16"><path d="M3.5 7V4.5a3.5 3.5 0 0 1 7 0V7" stroke="#9a7a18" stroke-width="1.6" fill="none"/>
<rect x="1" y="7" width="12" height="9" fill="#f0c840" stroke="#9a7a18"/><rect x="6" y="10" width="2" height="3" fill="#6a5010"/></svg>
<div class="t" style="left:1196px;top:711px;transform:scaleX(0.9074);transform-origin:0 0;">SFTP-3</div>
<svg style="position:absolute;left:1259px;top:710px" width="15" height="16" viewBox="0 0 15 16"><rect x="0.5" y="1.5" width="8" height="9" fill="#e4e4e4" stroke="#b8b8b8"/><rect x="5.5" y="0.5" width="8" height="11" fill="#e8e8e8" stroke="#b8b8b8"/><path d="M7 11v4M3 15h8" stroke="#b8b8b8"/></svg>
<div class="t" style="left:1307px;top:711px;transform:scaleX(0.9250);transform-origin:0 0;">0:02:06</div>
</body></html>
